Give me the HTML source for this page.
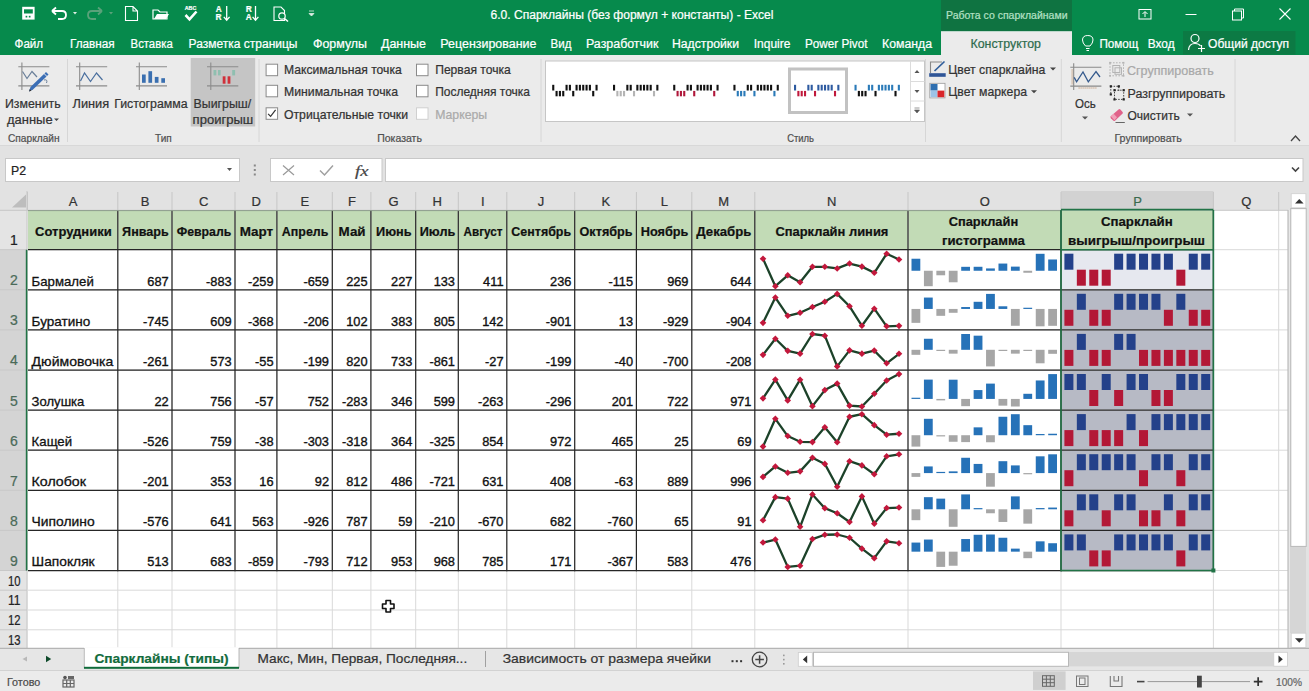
<!DOCTYPE html>
<html><head><meta charset="utf-8"><style>
html,body{margin:0;padding:0;background:#fff;overflow:hidden;}
svg{display:block;font-family:"Liberation Sans",sans-serif;}
</style></head><body>
<svg width="1309" height="691" viewBox="0 0 1309 691">
<rect x="0" y="0" width="1309" height="55" fill="#068a4c" />
<rect x="941" y="0" width="131" height="31" fill="#0f7341" />
<rect x="941" y="31.2" width="131" height="24" fill="#ebebeb" />
<rect x="1183" y="31" width="112.5" height="23.5" fill="#0c7a44" />
<text x="490.5" y="19" font-size="12" fill="#ffffff" text-anchor="start" textLength="283" lengthAdjust="spacingAndGlyphs"  stroke="#ffffff" stroke-width="0.22">6.0. Спарклайны (без формул + константы) - Excel</text>
<text x="946" y="18.5" font-size="10.5" fill="#b3e0c4" text-anchor="start" textLength="121.5" lengthAdjust="spacingAndGlyphs"  stroke="#b3e0c4" stroke-width="0.22">Работа со спарклайнами</text>
<text x="14.6" y="48" font-size="12" fill="#ffffff" text-anchor="start" textLength="28.5" lengthAdjust="spacingAndGlyphs"  stroke="#ffffff" stroke-width="0.22">Файл</text>
<text x="70" y="48" font-size="12" fill="#ffffff" text-anchor="start" textLength="44.7" lengthAdjust="spacingAndGlyphs"  stroke="#ffffff" stroke-width="0.22">Главная</text>
<text x="130.6" y="48" font-size="12" fill="#ffffff" text-anchor="start" textLength="42.1" lengthAdjust="spacingAndGlyphs"  stroke="#ffffff" stroke-width="0.22">Вставка</text>
<text x="188.6" y="48" font-size="12" fill="#ffffff" text-anchor="start" textLength="108.9" lengthAdjust="spacingAndGlyphs"  stroke="#ffffff" stroke-width="0.22">Разметка страницы</text>
<text x="313" y="48" font-size="12" fill="#ffffff" text-anchor="start" textLength="54" lengthAdjust="spacingAndGlyphs"  stroke="#ffffff" stroke-width="0.22">Формулы</text>
<text x="381" y="48" font-size="12" fill="#ffffff" text-anchor="start" textLength="45" lengthAdjust="spacingAndGlyphs"  stroke="#ffffff" stroke-width="0.22">Данные</text>
<text x="440.3" y="48" font-size="12" fill="#ffffff" text-anchor="start" textLength="96.1" lengthAdjust="spacingAndGlyphs"  stroke="#ffffff" stroke-width="0.22">Рецензирование</text>
<text x="550.6" y="48" font-size="12" fill="#ffffff" text-anchor="start" textLength="20.8" lengthAdjust="spacingAndGlyphs"  stroke="#ffffff" stroke-width="0.22">Вид</text>
<text x="586" y="48" font-size="12" fill="#ffffff" text-anchor="start" textLength="72.4" lengthAdjust="spacingAndGlyphs"  stroke="#ffffff" stroke-width="0.22">Разработчик</text>
<text x="672" y="48" font-size="12" fill="#ffffff" text-anchor="start" textLength="67" lengthAdjust="spacingAndGlyphs"  stroke="#ffffff" stroke-width="0.22">Надстройки</text>
<text x="753.8" y="48" font-size="12" fill="#ffffff" text-anchor="start" textLength="36.6" lengthAdjust="spacingAndGlyphs"  stroke="#ffffff" stroke-width="0.22">Inquire</text>
<text x="805" y="48" font-size="12" fill="#ffffff" text-anchor="start" textLength="62.4" lengthAdjust="spacingAndGlyphs"  stroke="#ffffff" stroke-width="0.22">Power Pivot</text>
<text x="882" y="48" font-size="12" fill="#ffffff" text-anchor="start" textLength="50" lengthAdjust="spacingAndGlyphs"  stroke="#ffffff" stroke-width="0.22">Команда</text>
<text x="1099.4" y="48" font-size="12" fill="#ffffff" text-anchor="start" textLength="39.1" lengthAdjust="spacingAndGlyphs"  stroke="#ffffff" stroke-width="0.22">Помощ</text>
<text x="1147.7" y="48" font-size="12" fill="#ffffff" text-anchor="start" textLength="26.9" lengthAdjust="spacingAndGlyphs"  stroke="#ffffff" stroke-width="0.22">Вход</text>
<text x="1208" y="48" font-size="12" fill="#ffffff" text-anchor="start" textLength="81" lengthAdjust="spacingAndGlyphs"  stroke="#ffffff" stroke-width="0.22">Общий доступ</text>
<text x="970.5" y="48" font-size="12.3" fill="#2e6b4e" text-anchor="start" textLength="70.5" lengthAdjust="spacingAndGlyphs"  stroke="#2e6b4e" stroke-width="0.22">Конструктор</text>
<rect x="0" y="55" width="1309" height="91" fill="#ebebeb" />
<rect x="0" y="145" width="1309" height="1" fill="#d8d8d8" />
<line x1="67.5" y1="59" x2="67.5" y2="142" stroke="#d6d6d6" stroke-width="1" />
<line x1="259" y1="59" x2="259" y2="142" stroke="#d6d6d6" stroke-width="1" />
<line x1="541" y1="59" x2="541" y2="142" stroke="#d6d6d6" stroke-width="1" />
<line x1="925.5" y1="59" x2="925.5" y2="142" stroke="#d6d6d6" stroke-width="1" />
<line x1="1061.3" y1="59" x2="1061.3" y2="142" stroke="#d6d6d6" stroke-width="1" />
<line x1="1235" y1="59" x2="1235" y2="142" stroke="#d6d6d6" stroke-width="1" />
<text x="8" y="142" font-size="10.5" fill="#505050" text-anchor="start" textLength="51.6" lengthAdjust="spacingAndGlyphs"  stroke="#505050" stroke-width="0.22">Спарклайн</text>
<text x="155" y="142" font-size="10.5" fill="#505050" text-anchor="start" textLength="16.8" lengthAdjust="spacingAndGlyphs"  stroke="#505050" stroke-width="0.22">Тип</text>
<text x="377.2" y="142" font-size="10.5" fill="#505050" text-anchor="start" textLength="44.7" lengthAdjust="spacingAndGlyphs"  stroke="#505050" stroke-width="0.22">Показать</text>
<text x="787.2" y="142" font-size="10.5" fill="#505050" text-anchor="start" textLength="26.8" lengthAdjust="spacingAndGlyphs"  stroke="#505050" stroke-width="0.22">Стиль</text>
<text x="1114.4" y="142" font-size="10.5" fill="#505050" text-anchor="start" textLength="67.4" lengthAdjust="spacingAndGlyphs"  stroke="#505050" stroke-width="0.22">Группировать</text>
<rect x="190.7" y="58" width="64.5" height="68.5" fill="#c5c5c5" />
<text x="5" y="107.6" font-size="12.3" fill="#333" text-anchor="start" textLength="55.6" lengthAdjust="spacingAndGlyphs"  stroke="#333" stroke-width="0.22">Изменить</text>
<text x="7" y="123.6" font-size="12.3" fill="#333" text-anchor="start" textLength="45.6" lengthAdjust="spacingAndGlyphs"  stroke="#333" stroke-width="0.22">данные</text>
<text x="72.5" y="107.6" font-size="12.3" fill="#333" text-anchor="start" textLength="36.7" lengthAdjust="spacingAndGlyphs"  stroke="#333" stroke-width="0.22">Линия</text>
<text x="114.2" y="107.6" font-size="12.3" fill="#333" text-anchor="start" textLength="73.5" lengthAdjust="spacingAndGlyphs"  stroke="#333" stroke-width="0.22">Гистограмма</text>
<text x="193.6" y="107.6" font-size="12.3" fill="#333" text-anchor="start" textLength="57.6" lengthAdjust="spacingAndGlyphs"  stroke="#333" stroke-width="0.22">Выигрыш/</text>
<text x="192.6" y="123.6" font-size="12.3" fill="#333" text-anchor="start" textLength="60.6" lengthAdjust="spacingAndGlyphs"  stroke="#333" stroke-width="0.22">проигрыш</text>
<rect x="266.1" y="64.2" width="11.5" height="11.5" fill="#ffffff" stroke="#8a8a8a" stroke-width="1"/>
<rect x="266.1" y="85.3" width="11.5" height="11.5" fill="#ffffff" stroke="#8a8a8a" stroke-width="1"/>
<rect x="266.1" y="107.8" width="11.5" height="11.5" fill="#ffffff" stroke="#8a8a8a" stroke-width="1"/>
<path d="M268.1 113.8 L270.6 116.3 L275.6 109.8" stroke="#333" stroke-width="1.2" fill="none"/>
<rect x="416.5" y="64.2" width="11.5" height="11.5" fill="#ffffff" stroke="#8a8a8a" stroke-width="1"/>
<rect x="416.5" y="85.3" width="11.5" height="11.5" fill="#ffffff" stroke="#8a8a8a" stroke-width="1"/>
<rect x="416.5" y="107.8" width="11.5" height="11.5" fill="#ffffff" stroke="#d0d0d0" stroke-width="1"/>
<text x="284" y="74" font-size="12.2" fill="#333" text-anchor="start" textLength="117.7" lengthAdjust="spacingAndGlyphs"  stroke="#333" stroke-width="0.22">Максимальная точка</text>
<text x="284" y="96" font-size="12.2" fill="#333" text-anchor="start" textLength="114" lengthAdjust="spacingAndGlyphs"  stroke="#333" stroke-width="0.22">Минимальная точка</text>
<text x="284" y="118.5" font-size="12.2" fill="#333" text-anchor="start" textLength="124" lengthAdjust="spacingAndGlyphs"  stroke="#333" stroke-width="0.22">Отрицательные точки</text>
<text x="435.2" y="74" font-size="12.2" fill="#333" text-anchor="start" textLength="75.6" lengthAdjust="spacingAndGlyphs"  stroke="#333" stroke-width="0.22">Первая точка</text>
<text x="435.2" y="96" font-size="12.2" fill="#333" text-anchor="start" textLength="94.8" lengthAdjust="spacingAndGlyphs"  stroke="#333" stroke-width="0.22">Последняя точка</text>
<text x="435.2" y="118.5" font-size="12.2" fill="#aaaaaa" text-anchor="start" textLength="52" lengthAdjust="spacingAndGlyphs"  stroke="#aaaaaa" stroke-width="0.22">Маркеры</text>
<rect x="545.5" y="61" width="379" height="60.5" fill="#ffffff" stroke="#c6c6c6" stroke-width="1"/>
<line x1="910.5" y1="61" x2="910.5" y2="121.5" stroke="#dcdcdc" stroke-width="1" />
<line x1="910.5" y1="81.5" x2="924.5" y2="81.5" stroke="#dcdcdc" stroke-width="1" />
<line x1="910.5" y1="101" x2="924.5" y2="101" stroke="#dcdcdc" stroke-width="1" />
<path d="M914.5 73 L917 70 L919.5 73 Z" fill="#555"/>
<path d="M914.5 90 L917 93 L919.5 90 Z" fill="#555"/>
<path d="M914.5 110 L917 113 L919.5 110 Z M914.5 108 h5" fill="#555" stroke="#555" stroke-width="0.6"/>
<rect x="789.5" y="69" width="57" height="43.5" fill="none" stroke="#c2c2c2" stroke-width="3"/>
<rect x="552.2" y="84.8" width="2.1" height="5.7" fill="#111" />
<rect x="555.53" y="90.9" width="2.1" height="5.4" fill="#111" />
<rect x="558.86" y="90.9" width="2.1" height="5.4" fill="#111" />
<rect x="562.19" y="90.9" width="2.1" height="5.4" fill="#111" />
<rect x="565.52" y="84.8" width="2.1" height="5.7" fill="#111" />
<rect x="568.85" y="84.8" width="2.1" height="5.7" fill="#111" />
<rect x="572.18" y="90.9" width="2.1" height="5.4" fill="#111" />
<rect x="575.52" y="84.8" width="2.1" height="5.7" fill="#111" />
<rect x="578.85" y="84.8" width="2.1" height="5.7" fill="#111" />
<rect x="582.18" y="84.8" width="2.1" height="5.7" fill="#111" />
<rect x="585.51" y="84.8" width="2.1" height="5.7" fill="#111" />
<rect x="588.84" y="84.8" width="2.1" height="5.7" fill="#111" />
<rect x="592.17" y="90.9" width="2.1" height="5.4" fill="#111" />
<rect x="595.5" y="84.8" width="2.1" height="5.7" fill="#111" />
<rect x="613.0" y="84.8" width="2.1" height="5.7" fill="#111" />
<rect x="616.33" y="90.9" width="2.1" height="5.4" fill="#b4b4b4" />
<rect x="619.66" y="90.9" width="2.1" height="5.4" fill="#b4b4b4" />
<rect x="622.99" y="90.9" width="2.1" height="5.4" fill="#b4b4b4" />
<rect x="626.32" y="84.8" width="2.1" height="5.7" fill="#111" />
<rect x="629.65" y="84.8" width="2.1" height="5.7" fill="#111" />
<rect x="632.98" y="90.9" width="2.1" height="5.4" fill="#b4b4b4" />
<rect x="636.32" y="84.8" width="2.1" height="5.7" fill="#111" />
<rect x="639.65" y="84.8" width="2.1" height="5.7" fill="#111" />
<rect x="642.98" y="84.8" width="2.1" height="5.7" fill="#111" />
<rect x="646.31" y="84.8" width="2.1" height="5.7" fill="#111" />
<rect x="649.64" y="84.8" width="2.1" height="5.7" fill="#111" />
<rect x="652.97" y="90.9" width="2.1" height="5.4" fill="#b4b4b4" />
<rect x="656.3" y="84.8" width="2.1" height="5.7" fill="#111" />
<rect x="673.2" y="84.8" width="2.1" height="5.7" fill="#111" />
<rect x="676.53" y="90.9" width="2.1" height="5.4" fill="#b0173a" />
<rect x="679.86" y="90.9" width="2.1" height="5.4" fill="#b0173a" />
<rect x="683.19" y="90.9" width="2.1" height="5.4" fill="#b0173a" />
<rect x="686.52" y="84.8" width="2.1" height="5.7" fill="#111" />
<rect x="689.85" y="84.8" width="2.1" height="5.7" fill="#111" />
<rect x="693.18" y="90.9" width="2.1" height="5.4" fill="#b0173a" />
<rect x="696.52" y="84.8" width="2.1" height="5.7" fill="#111" />
<rect x="699.85" y="84.8" width="2.1" height="5.7" fill="#111" />
<rect x="703.18" y="84.8" width="2.1" height="5.7" fill="#111" />
<rect x="706.51" y="84.8" width="2.1" height="5.7" fill="#111" />
<rect x="709.84" y="84.8" width="2.1" height="5.7" fill="#111" />
<rect x="713.17" y="90.9" width="2.1" height="5.4" fill="#b0173a" />
<rect x="716.5" y="84.8" width="2.1" height="5.7" fill="#111" />
<rect x="733.4" y="84.8" width="2.1" height="5.7" fill="#111" />
<rect x="736.73" y="90.9" width="2.1" height="5.4" fill="#2a7ab8" />
<rect x="740.06" y="90.9" width="2.1" height="5.4" fill="#2a7ab8" />
<rect x="743.39" y="90.9" width="2.1" height="5.4" fill="#2a7ab8" />
<rect x="746.72" y="84.8" width="2.1" height="5.7" fill="#111" />
<rect x="750.05" y="84.8" width="2.1" height="5.7" fill="#111" />
<rect x="753.38" y="90.9" width="2.1" height="5.4" fill="#2a7ab8" />
<rect x="756.72" y="84.8" width="2.1" height="5.7" fill="#111" />
<rect x="760.05" y="84.8" width="2.1" height="5.7" fill="#111" />
<rect x="763.38" y="84.8" width="2.1" height="5.7" fill="#111" />
<rect x="766.71" y="84.8" width="2.1" height="5.7" fill="#111" />
<rect x="770.04" y="84.8" width="2.1" height="5.7" fill="#111" />
<rect x="773.37" y="90.9" width="2.1" height="5.4" fill="#2a7ab8" />
<rect x="776.7" y="84.8" width="2.1" height="5.7" fill="#111" />
<rect x="794.0" y="84.8" width="2.1" height="5.7" fill="#2d5aa0" />
<rect x="797.33" y="90.9" width="2.1" height="5.4" fill="#c0193c" />
<rect x="800.66" y="90.9" width="2.1" height="5.4" fill="#c0193c" />
<rect x="803.99" y="90.9" width="2.1" height="5.4" fill="#c0193c" />
<rect x="807.32" y="84.8" width="2.1" height="5.7" fill="#2d5aa0" />
<rect x="810.65" y="84.8" width="2.1" height="5.7" fill="#2d5aa0" />
<rect x="813.98" y="90.9" width="2.1" height="5.4" fill="#c0193c" />
<rect x="817.32" y="84.8" width="2.1" height="5.7" fill="#2d5aa0" />
<rect x="820.65" y="84.8" width="2.1" height="5.7" fill="#2d5aa0" />
<rect x="823.98" y="84.8" width="2.1" height="5.7" fill="#2d5aa0" />
<rect x="827.31" y="84.8" width="2.1" height="5.7" fill="#2d5aa0" />
<rect x="830.64" y="84.8" width="2.1" height="5.7" fill="#2d5aa0" />
<rect x="833.97" y="90.9" width="2.1" height="5.4" fill="#c0193c" />
<rect x="837.3" y="84.8" width="2.1" height="5.7" fill="#2d5aa0" />
<rect x="854.5" y="84.8" width="2.1" height="5.7" fill="#2a7ab8" />
<rect x="857.83" y="90.9" width="2.1" height="5.4" fill="#111" />
<rect x="861.16" y="90.9" width="2.1" height="5.4" fill="#111" />
<rect x="864.49" y="90.9" width="2.1" height="5.4" fill="#111" />
<rect x="867.82" y="84.8" width="2.1" height="5.7" fill="#2a7ab8" />
<rect x="871.15" y="84.8" width="2.1" height="5.7" fill="#2a7ab8" />
<rect x="874.48" y="90.9" width="2.1" height="5.4" fill="#111" />
<rect x="877.82" y="84.8" width="2.1" height="5.7" fill="#2a7ab8" />
<rect x="881.15" y="84.8" width="2.1" height="5.7" fill="#2a7ab8" />
<rect x="884.48" y="84.8" width="2.1" height="5.7" fill="#2a7ab8" />
<rect x="887.81" y="84.8" width="2.1" height="5.7" fill="#2a7ab8" />
<rect x="891.14" y="84.8" width="2.1" height="5.7" fill="#2a7ab8" />
<rect x="894.47" y="90.9" width="2.1" height="5.4" fill="#111" />
<rect x="897.8" y="84.8" width="2.1" height="5.7" fill="#2a7ab8" />
<text x="948.3" y="74" font-size="12.2" fill="#333" text-anchor="start" textLength="97" lengthAdjust="spacingAndGlyphs"  stroke="#333" stroke-width="0.22">Цвет спарклайна</text>
<text x="948.3" y="96" font-size="12.2" fill="#333" text-anchor="start" textLength="78.7" lengthAdjust="spacingAndGlyphs"  stroke="#333" stroke-width="0.22">Цвет маркера</text>
<path d="M1050 67.6 L1056 67.6 L1053 70.6 Z" fill="#444"/>
<path d="M1031 90.2 L1037 90.2 L1034 93.2 Z" fill="#444"/>
<path d="M930.5 73 V62 H942" stroke="#8a8a8a" stroke-width="1.1" fill="none"/>
<path d="M934.5 71 L944.5 61.5" stroke="#2f5d9a" stroke-width="1.7"/>
<rect x="929.2" y="73.2" width="16.5" height="3.6" fill="#2f5597" />
<rect x="929.8" y="83.3" width="15.2" height="14.6" fill="#ffffff" stroke="#999" stroke-width="0.8"/>
<rect x="930.5" y="84" width="7" height="6.6" fill="#2f6fb0" />
<rect x="930.5" y="90.6" width="7" height="6.6" fill="#9dc3e6" />
<rect x="937.5" y="90.6" width="6.8" height="6.6" fill="#d9262a" />
<text x="1075" y="107.5" font-size="12.3" fill="#333" text-anchor="start" textLength="20.7" lengthAdjust="spacingAndGlyphs"  stroke="#333" stroke-width="0.22">Ось</text>
<path d="M1082 116.5 L1088 116.5 L1085 119.5 Z" fill="#555"/>
<path d="M1072.3 69.6 V84.2" stroke="#c9a98e" stroke-width="2" stroke-dasharray="1 1"/><path d="M1078.6 88 H1097" stroke="#c9a98e" stroke-width="1.3" stroke-dasharray="1 1"/>
<g stroke="#8a8a8a" stroke-width="1.1" fill="none"><path d="M1073.7 63.3 V90 M1070.3 67.2 H1101.4 M1070.3 86.1 H1101.4"/></g>
<path d="M1074.2 77.4 L1076.6 81.8 L1083 72 L1088.3 81.8 L1096 71.6 L1100 77" stroke="#34598c" stroke-width="1.3" fill="none"/>
<text x="1127" y="74.5" font-size="12.3" fill="#a8a8a8" text-anchor="start" textLength="86.7" lengthAdjust="spacingAndGlyphs"  stroke="#a8a8a8" stroke-width="0.22">Сгруппировать</text>
<text x="1127.5" y="97.5" font-size="12.3" fill="#333" text-anchor="start" textLength="97.8" lengthAdjust="spacingAndGlyphs"  stroke="#333" stroke-width="0.22">Разгруппировать</text>
<text x="1127.5" y="120" font-size="12.3" fill="#333" text-anchor="start" textLength="52.3" lengthAdjust="spacingAndGlyphs"  stroke="#333" stroke-width="0.22">Очистить</text>
<path d="M1187 113.5 L1193 113.5 L1190 116.5 Z" fill="#555"/>
<g fill="none" stroke="#b4b4b4" stroke-width="1"><rect x="1110" y="62.8" width="13.5" height="13" stroke-dasharray="1.6 1.4"/><rect x="1112.8" y="65.5" width="7" height="7"/><rect x="1115" y="67.8" width="6.5" height="6.5"/></g>
<rect x="1109.1" y="61.9" width="1.8" height="1.8" fill="#b4b4b4" />
<rect x="1122.6" y="61.9" width="1.8" height="1.8" fill="#b4b4b4" />
<rect x="1109.1" y="74.89999999999999" width="1.8" height="1.8" fill="#b4b4b4" />
<rect x="1122.6" y="74.89999999999999" width="1.8" height="1.8" fill="#b4b4b4" />
<g fill="none" stroke="#333" stroke-width="0.9"><path d="M1110.8 86.3 H1118.8 V92.2 M1110.8 86.3 V95" stroke-dasharray="1.5 1.3"/><rect x="1114.5" y="90.2" width="9.2" height="9.2" stroke-dasharray="1.5 1.3"/></g>
<rect x="1109.7" y="85.2" width="2.2" height="2.2" fill="#222" />
<rect x="1117.7" y="85.2" width="2.2" height="2.2" fill="#222" />
<rect x="1122.6000000000001" y="89.10000000000001" width="2.2" height="2.2" fill="#222" />
<rect x="1122.6000000000001" y="98.30000000000001" width="2.2" height="2.2" fill="#222" />
<rect x="1113.4" y="98.30000000000001" width="2.2" height="2.2" fill="#222" />
<rect x="1109.7" y="93.30000000000001" width="2.2" height="2.2" fill="#222" />
<rect x="1113.4" y="89.10000000000001" width="2.2" height="2.2" fill="#222" />
<path d="M1110.8 116.3 L1118.5 109.5 Q1119.5 108.7 1120.4 109.6 L1122.6 112 Q1123.3 112.9 1122.4 113.8 L1115 120.7 Q1114 121.5 1113.1 120.6 L1110.9 118.3 Q1110 117.3 1110.8 116.3 Z" fill="#e0628a"/><path d="M1110.8 116.3 L1113.6 113.8 L1117 117.3 L1114.5 120.2 Z" fill="#f0a0b8"/><path d="M1115.5 122.5 H1124.8" stroke="#666" stroke-width="1"/>
<path d="M1291 141 L1295.5 136 L1300 141" stroke="#444" stroke-width="1.3" fill="none"/>
<g stroke="#8c8c8c" stroke-width="1.1" fill="none"><path d="M21.9 62.5 V90 M18.3 66.8 H49.4 M18.3 85.9 H49.4"/></g>
<path d="M22.5 71.5 L27 78.5 L32 71.5 L37 77" stroke="#6a7f99" stroke-width="1.2" fill="none"/>
<path d="M29 91.5 L30.5 87 L44 74 L46.5 76.5 L33 89.5 Z" fill="#3b6eb5"/><path d="M44.5 73.5 L46 72 L48.5 74.5 L47 76 Z" fill="#3b6eb5"/><path d="M29 91.5 L29.8 89 L31.5 90.7 Z" fill="#333"/><path d="M44 80 Q48 79 46.5 83" stroke="#6a7f99" stroke-width="1" fill="none"/>
<g stroke="#8c8c8c" stroke-width="1.1" fill="none"><path d="M79.7 62.5 V90 M76 66.8 H107.2 M76 85.9 H107.2"/></g>
<path d="M80.5 81 L84.5 73 L90.5 81.5 L96.5 73 L102.5 80" stroke="#4a6f9e" stroke-width="1.2" fill="none"/>
<g stroke="#8c8c8c" stroke-width="1.1" fill="none"><path d="M139.3 62.5 V90 M136 66.8 H167 M136 85.9 H167"/></g>
<rect x="142" y="74.5" width="3.7" height="8.3" fill="#3a6fb0" />
<rect x="148.4" y="71.2" width="3.7" height="11.6" fill="#3a6fb0" />
<rect x="154.8" y="76.9" width="3.7" height="5.9" fill="#3a6fb0" />
<rect x="161.3" y="78.2" width="3.7" height="4.6" fill="#3a6fb0" />
<g stroke="#8c8c8c" stroke-width="1.1" fill="none"><path d="M210.8 62.5 V90 M207 66.8 H238.3 M207 85.9 H238.3"/></g>
<rect x="213.5" y="70" width="2.8" height="5.4" fill="#8fbfb0" />
<rect x="218" y="70" width="2.6" height="5.4" fill="#8fbfb0" />
<rect x="232.2" y="70" width="2.9" height="5.4" fill="#8fbfb0" />
<rect x="222.7" y="76.3" width="2.8" height="7.4" fill="#d0303a" />
<rect x="227.6" y="76.3" width="2.8" height="7.4" fill="#d0303a" />
<path d="M54 118.5 L59 118.5 L56.5 121 Z" fill="#444"/>
<rect x="22.2" y="6.8" width="12.4" height="12.8" fill="#ffffff" />
<rect x="24" y="9.3" width="8.8" height="4.2" fill="#068a4c" />
<rect x="25.6" y="15.8" width="1.7" height="1.7" fill="#068a4c" />
<rect x="28.8" y="15.8" width="1.7" height="1.7" fill="#068a4c" />
<path d="M53 11 H62 Q66 11 66 15 Q66 19 62 19 H58" stroke="#fff" stroke-width="1.8" fill="none"/><path d="M52 11 L56 7.5 M52 11 L56 14.5" stroke="#fff" stroke-width="1.8"/>
<path d="M73 12 L77 12 L75 14.5 Z" fill="#dfeee5"/>
<path d="M101 11 H92 Q88 11 88 15 Q88 19 92 19 H96" stroke="#5aa27a" stroke-width="1.8" fill="none"/><path d="M102 11 L98 7.5 M102 11 L98 14.5" stroke="#5aa27a" stroke-width="1.8"/>
<path d="M109 12 L113 12 L111 14.5 Z" fill="#5aa27a"/>
<path d="M125.5 6.5 H133 L137.5 11 V20.5 H125.5 Z M133 6.5 V11 H137.5" stroke="#fff" stroke-width="1.1" fill="none"/>
<path d="M153 10 H158 L160 12 H167 V19 H153 Z" stroke="#fff" stroke-width="1.2" fill="none"/><path d="M154 19 L157 14 H169 L166 19 Z" fill="#fff"/>
<text x="190.5" y="9.8" font-size="6.2" font-weight="700" fill="#fff" text-anchor="middle" textLength="11.5" lengthAdjust="spacingAndGlyphs"  stroke="#fff" stroke-width="0.22">ABC</text>
<path d="M185.5 15 L189.5 19.3 L196.5 11.5" stroke="#fff" stroke-width="2.6" fill="none"/>
<text x="218.6" y="12.4" font-size="8.2" font-weight="700" fill="#fff" text-anchor="middle"  stroke="#fff" stroke-width="0.22">A</text>
<text x="218.6" y="20" font-size="8.2" font-weight="700" fill="#fff" text-anchor="middle" transform="translate(437.2 0) scale(-1 1)" stroke="#fff" stroke-width="0.22">Я</text>
<path d="M226.7 6 V19.5 M223.8 16.8 L226.7 20.2 L229.6 16.8" stroke="#fff" stroke-width="1.3" fill="none"/>
<text x="248.7" y="12.4" font-size="8.2" font-weight="700" fill="#fff" text-anchor="middle" transform="translate(497.4 0) scale(-1 1)" stroke="#fff" stroke-width="0.22">Я</text>
<text x="248.7" y="20" font-size="8.2" font-weight="700" fill="#fff" text-anchor="middle"  stroke="#fff" stroke-width="0.22">A</text>
<path d="M255.5 6 V19.5 M252.6 16.8 L255.5 20.2 L258.4 16.8" stroke="#fff" stroke-width="1.3" fill="none"/>
<path d="M274 7 H281 L284.5 10.5 V20.5 H274 Z" stroke="#fff" stroke-width="1.1" fill="none"/><circle cx="282" cy="16" r="3.2" stroke="#fff" stroke-width="1.2" fill="#068a4c"/><path d="M284.5 18.5 L288 21.5" stroke="#fff" stroke-width="1.6"/>
<path d="M309 11 H314 M309 13.5 L314 13.5 L311.5 16 Z" stroke="#dfeee5" stroke-width="0.8" fill="#dfeee5"/>
<g stroke="#fff" stroke-width="1" fill="none"><rect x="1139" y="9.5" width="12" height="9.5"/><path d="M1145 17 V12 M1142.5 14 L1145 11.5 L1147.5 14"/></g>
<path d="M1185.5 14.5 H1196.5" stroke="#fff" stroke-width="1"/>
<g stroke="#fff" stroke-width="1" fill="none"><rect x="1232.5" y="11" width="9" height="9"/><path d="M1234.5 11 V9 H1243.5 V18 H1241.5"/></g>
<path d="M1279.5 8.5 L1290.5 19.5 M1290.5 8.5 L1279.5 19.5" stroke="#fff" stroke-width="1.1"/>
<path d="M1085.5 46 Q1082.5 43 1082.5 40 Q1082.5 35.5 1087.8 35.5 Q1093 35.5 1093 40 Q1093 43 1090 46 Z M1086 48.5 H1089.5 M1086.5 50.5 H1089" stroke="#fff" stroke-width="1" fill="none"/>
<circle cx="1195" cy="38.5" r="4" stroke="#fff" stroke-width="1.2" fill="none"/><path d="M1188.5 50 Q1189 43.5 1195 43.5 Q1199 43.5 1200.5 46" stroke="#fff" stroke-width="1.2" fill="none"/><path d="M1201.5 45 V52 M1198 48.5 H1205" stroke="#fff" stroke-width="1.2"/>
<rect x="0" y="146" width="1309" height="45" fill="#e2e2e2" />
<rect x="5.5" y="158.5" width="234" height="23" fill="#ffffff" stroke="#c8c8c8" stroke-width="1"/>
<text x="11" y="175" font-size="12.3" fill="#222" text-anchor="start"  stroke="#222" stroke-width="0.22">P2</text>
<path d="M227 168 L232 168 L229.5 171 Z" fill="#555"/>
<rect x="253.8" y="164.5" width="2" height="2" fill="#888" />
<rect x="253.8" y="169" width="2" height="2" fill="#888" />
<rect x="253.8" y="173.5" width="2" height="2" fill="#888" />
<rect x="270.5" y="158.5" width="111.5" height="23" fill="#ffffff" stroke="#c8c8c8" stroke-width="1"/>
<path d="M283 165.5 L294 175 M294 165.5 L283 175" stroke="#9a9a9a" stroke-width="1.2"/>
<path d="M320 170.5 L324.5 175 L333 165.5" stroke="#a0a0a0" stroke-width="1.5" fill="none"/>
<text x="355" y="175.5" font-size="15.5" fill="#444" text-anchor="start" textLength="13.5" lengthAdjust="spacingAndGlyphs" font-family="Liberation Serif" font-style="italic" stroke="#444" stroke-width="0.22">fx</text>
<rect x="385.5" y="158.5" width="917.5" height="23" fill="#ffffff" stroke="#c8c8c8" stroke-width="1"/>
<path d="M1292 167.5 L1295.5 171 L1299 167.5" stroke="#444" stroke-width="1.6" fill="none"/>
<rect x="0" y="191" width="1288" height="19.5" fill="#e2e2e2" />
<rect x="0" y="210" width="27.5" height="438" fill="#e4e4e4" />
<rect x="1061" y="191" width="152.4" height="19.5" fill="#d2d2d2" />
<rect x="0" y="249.7" width="27" height="320.8" fill="#d4d4d4" />
<rect x="28" y="210" width="1260" height="438" fill="#ffffff" />
<rect x="28" y="210" width="1185.4" height="40" fill="#c2dbb6" />
<rect x="1061" y="289.8" width="152.4" height="280.7" fill="#b7bac5" />
<rect x="1061" y="249.7" width="152.4" height="40.1" fill="#e6e8ef" />
<line x1="117.8" y1="210" x2="117.8" y2="648" stroke="#d9d9d9" stroke-width="1" />
<line x1="172.0" y1="210" x2="172.0" y2="648" stroke="#d9d9d9" stroke-width="1" />
<line x1="235.0" y1="210" x2="235.0" y2="648" stroke="#d9d9d9" stroke-width="1" />
<line x1="276.9" y1="210" x2="276.9" y2="648" stroke="#d9d9d9" stroke-width="1" />
<line x1="332.3" y1="210" x2="332.3" y2="648" stroke="#d9d9d9" stroke-width="1" />
<line x1="370.9" y1="210" x2="370.9" y2="648" stroke="#d9d9d9" stroke-width="1" />
<line x1="415.7" y1="210" x2="415.7" y2="648" stroke="#d9d9d9" stroke-width="1" />
<line x1="458.3" y1="210" x2="458.3" y2="648" stroke="#d9d9d9" stroke-width="1" />
<line x1="506.8" y1="210" x2="506.8" y2="648" stroke="#d9d9d9" stroke-width="1" />
<line x1="574.7" y1="210" x2="574.7" y2="648" stroke="#d9d9d9" stroke-width="1" />
<line x1="636.4" y1="210" x2="636.4" y2="648" stroke="#d9d9d9" stroke-width="1" />
<line x1="691.8" y1="210" x2="691.8" y2="648" stroke="#d9d9d9" stroke-width="1" />
<line x1="754.8" y1="210" x2="754.8" y2="648" stroke="#d9d9d9" stroke-width="1" />
<line x1="908" y1="210" x2="908" y2="648" stroke="#d9d9d9" stroke-width="1" />
<line x1="1061" y1="210" x2="1061" y2="648" stroke="#d9d9d9" stroke-width="1" />
<line x1="1213.4" y1="210" x2="1213.4" y2="648" stroke="#d9d9d9" stroke-width="1" />
<line x1="1278.7" y1="210" x2="1278.7" y2="648" stroke="#d9d9d9" stroke-width="1" />
<line x1="28" y1="249.7" x2="1288" y2="249.7" stroke="#d9d9d9" stroke-width="1" />
<line x1="28" y1="289.8" x2="1288" y2="289.8" stroke="#d9d9d9" stroke-width="1" />
<line x1="28" y1="329.9" x2="1288" y2="329.9" stroke="#d9d9d9" stroke-width="1" />
<line x1="28" y1="370.0" x2="1288" y2="370.0" stroke="#d9d9d9" stroke-width="1" />
<line x1="28" y1="410.1" x2="1288" y2="410.1" stroke="#d9d9d9" stroke-width="1" />
<line x1="28" y1="450.2" x2="1288" y2="450.2" stroke="#d9d9d9" stroke-width="1" />
<line x1="28" y1="490.3" x2="1288" y2="490.3" stroke="#d9d9d9" stroke-width="1" />
<line x1="28" y1="530.4" x2="1288" y2="530.4" stroke="#d9d9d9" stroke-width="1" />
<line x1="28" y1="570.5" x2="1288" y2="570.5" stroke="#d9d9d9" stroke-width="1" />
<line x1="28" y1="590.2" x2="1288" y2="590.2" stroke="#d9d9d9" stroke-width="1" />
<line x1="28" y1="610.0" x2="1288" y2="610.0" stroke="#d9d9d9" stroke-width="1" />
<line x1="28" y1="629.8" x2="1288" y2="629.8" stroke="#d9d9d9" stroke-width="1" />
<line x1="27.5" y1="192" x2="27.5" y2="210" stroke="#c6c6c6" stroke-width="1" />
<line x1="117.8" y1="192" x2="117.8" y2="210" stroke="#c6c6c6" stroke-width="1" />
<line x1="172.0" y1="192" x2="172.0" y2="210" stroke="#c6c6c6" stroke-width="1" />
<line x1="235.0" y1="192" x2="235.0" y2="210" stroke="#c6c6c6" stroke-width="1" />
<line x1="276.9" y1="192" x2="276.9" y2="210" stroke="#c6c6c6" stroke-width="1" />
<line x1="332.3" y1="192" x2="332.3" y2="210" stroke="#c6c6c6" stroke-width="1" />
<line x1="370.9" y1="192" x2="370.9" y2="210" stroke="#c6c6c6" stroke-width="1" />
<line x1="415.7" y1="192" x2="415.7" y2="210" stroke="#c6c6c6" stroke-width="1" />
<line x1="458.3" y1="192" x2="458.3" y2="210" stroke="#c6c6c6" stroke-width="1" />
<line x1="506.8" y1="192" x2="506.8" y2="210" stroke="#c6c6c6" stroke-width="1" />
<line x1="574.7" y1="192" x2="574.7" y2="210" stroke="#c6c6c6" stroke-width="1" />
<line x1="636.4" y1="192" x2="636.4" y2="210" stroke="#c6c6c6" stroke-width="1" />
<line x1="691.8" y1="192" x2="691.8" y2="210" stroke="#c6c6c6" stroke-width="1" />
<line x1="754.8" y1="192" x2="754.8" y2="210" stroke="#c6c6c6" stroke-width="1" />
<line x1="908" y1="192" x2="908" y2="210" stroke="#c6c6c6" stroke-width="1" />
<line x1="1061" y1="192" x2="1061" y2="210" stroke="#c6c6c6" stroke-width="1" />
<line x1="1213.4" y1="192" x2="1213.4" y2="210" stroke="#c6c6c6" stroke-width="1" />
<line x1="1278.7" y1="192" x2="1278.7" y2="210" stroke="#c6c6c6" stroke-width="1" />
<line x1="0" y1="210.3" x2="1288" y2="210.3" stroke="#c6c6c6" stroke-width="1" />
<line x1="0" y1="249.7" x2="27" y2="249.7" stroke="#c8c8c8" stroke-width="1" />
<line x1="0" y1="289.8" x2="27" y2="289.8" stroke="#c8c8c8" stroke-width="1" />
<line x1="0" y1="329.9" x2="27" y2="329.9" stroke="#c8c8c8" stroke-width="1" />
<line x1="0" y1="370.0" x2="27" y2="370.0" stroke="#c8c8c8" stroke-width="1" />
<line x1="0" y1="410.1" x2="27" y2="410.1" stroke="#c8c8c8" stroke-width="1" />
<line x1="0" y1="450.2" x2="27" y2="450.2" stroke="#c8c8c8" stroke-width="1" />
<line x1="0" y1="490.3" x2="27" y2="490.3" stroke="#c8c8c8" stroke-width="1" />
<line x1="0" y1="530.4" x2="27" y2="530.4" stroke="#c8c8c8" stroke-width="1" />
<line x1="0" y1="570.5" x2="27" y2="570.5" stroke="#c8c8c8" stroke-width="1" />
<line x1="0" y1="590.2" x2="27" y2="590.2" stroke="#c8c8c8" stroke-width="1" />
<line x1="0" y1="610.0" x2="27" y2="610.0" stroke="#c8c8c8" stroke-width="1" />
<line x1="0" y1="629.8" x2="27" y2="629.8" stroke="#c8c8c8" stroke-width="1" />
<line x1="27" y1="191" x2="27" y2="648" stroke="#c6c6c6" stroke-width="1" />
<line x1="26.6" y1="249.7" x2="26.6" y2="570.5" stroke="#217346" stroke-width="1.6" />
<line x1="1061" y1="209.6" x2="1213.4" y2="209.6" stroke="#217346" stroke-width="1.6" />
<path d="M12 207.5 L26 207.5 L26 194.5 Z" fill="#bdbdbd"/>
<text x="73.2" y="205.5" font-size="13" fill="#333" text-anchor="middle"  stroke="#333" stroke-width="0.22">A</text>
<text x="145.20000000000002" y="205.5" font-size="13" fill="#333" text-anchor="middle"  stroke="#333" stroke-width="0.22">B</text>
<text x="203.8" y="205.5" font-size="13" fill="#333" text-anchor="middle"  stroke="#333" stroke-width="0.22">C</text>
<text x="256.25" y="205.5" font-size="13" fill="#333" text-anchor="middle"  stroke="#333" stroke-width="0.22">D</text>
<text x="304.90000000000003" y="205.5" font-size="13" fill="#333" text-anchor="middle"  stroke="#333" stroke-width="0.22">E</text>
<text x="351.90000000000003" y="205.5" font-size="13" fill="#333" text-anchor="middle"  stroke="#333" stroke-width="0.22">F</text>
<text x="393.59999999999997" y="205.5" font-size="13" fill="#333" text-anchor="middle"  stroke="#333" stroke-width="0.22">G</text>
<text x="437.3" y="205.5" font-size="13" fill="#333" text-anchor="middle"  stroke="#333" stroke-width="0.22">H</text>
<text x="482.85" y="205.5" font-size="13" fill="#333" text-anchor="middle"  stroke="#333" stroke-width="0.22">I</text>
<text x="541.05" y="205.5" font-size="13" fill="#333" text-anchor="middle"  stroke="#333" stroke-width="0.22">J</text>
<text x="605.8499999999999" y="205.5" font-size="13" fill="#333" text-anchor="middle"  stroke="#333" stroke-width="0.22">K</text>
<text x="664.3999999999999" y="205.5" font-size="13" fill="#333" text-anchor="middle"  stroke="#333" stroke-width="0.22">L</text>
<text x="723.5999999999999" y="205.5" font-size="13" fill="#333" text-anchor="middle"  stroke="#333" stroke-width="0.22">M</text>
<text x="831.6999999999999" y="205.5" font-size="13" fill="#333" text-anchor="middle"  stroke="#333" stroke-width="0.22">N</text>
<text x="984.8" y="205.5" font-size="13" fill="#333" text-anchor="middle"  stroke="#333" stroke-width="0.22">O</text>
<text x="1137.5" y="205.5" font-size="13" fill="#3a6a4e" text-anchor="middle"  stroke="#3a6a4e" stroke-width="0.22">P</text>
<text x="1246.3500000000001" y="205.5" font-size="13" fill="#333" text-anchor="middle"  stroke="#333" stroke-width="0.22">Q</text>
<text x="14" y="245.1" font-size="14" fill="#222" text-anchor="middle" textLength="7.8" lengthAdjust="spacingAndGlyphs"  stroke="#222" stroke-width="0.22">1</text>
<text x="14" y="285.2" font-size="14" fill="#4a6a58" text-anchor="middle" textLength="7.8" lengthAdjust="spacingAndGlyphs"  stroke="#4a6a58" stroke-width="0.22">2</text>
<text x="14" y="325.29999999999995" font-size="14" fill="#4a6a58" text-anchor="middle" textLength="7.8" lengthAdjust="spacingAndGlyphs"  stroke="#4a6a58" stroke-width="0.22">3</text>
<text x="14" y="365.4" font-size="14" fill="#4a6a58" text-anchor="middle" textLength="7.8" lengthAdjust="spacingAndGlyphs"  stroke="#4a6a58" stroke-width="0.22">4</text>
<text x="14" y="405.5" font-size="14" fill="#4a6a58" text-anchor="middle" textLength="7.8" lengthAdjust="spacingAndGlyphs"  stroke="#4a6a58" stroke-width="0.22">5</text>
<text x="14" y="445.59999999999997" font-size="14" fill="#4a6a58" text-anchor="middle" textLength="7.8" lengthAdjust="spacingAndGlyphs"  stroke="#4a6a58" stroke-width="0.22">6</text>
<text x="14" y="485.7" font-size="14" fill="#4a6a58" text-anchor="middle" textLength="7.8" lengthAdjust="spacingAndGlyphs"  stroke="#4a6a58" stroke-width="0.22">7</text>
<text x="14" y="525.8" font-size="14" fill="#4a6a58" text-anchor="middle" textLength="7.8" lengthAdjust="spacingAndGlyphs"  stroke="#4a6a58" stroke-width="0.22">8</text>
<text x="14" y="565.9" font-size="14" fill="#4a6a58" text-anchor="middle" textLength="7.8" lengthAdjust="spacingAndGlyphs"  stroke="#4a6a58" stroke-width="0.22">9</text>
<text x="14.2" y="585.6" font-size="14" fill="#222" text-anchor="middle" textLength="12.5" lengthAdjust="spacingAndGlyphs"  stroke="#222" stroke-width="0.22">10</text>
<text x="14.2" y="605.4" font-size="14" fill="#222" text-anchor="middle" textLength="12.5" lengthAdjust="spacingAndGlyphs"  stroke="#222" stroke-width="0.22">11</text>
<text x="14.2" y="625.1999999999999" font-size="14" fill="#222" text-anchor="middle" textLength="12.5" lengthAdjust="spacingAndGlyphs"  stroke="#222" stroke-width="0.22">12</text>
<text x="14.2" y="645.0" font-size="14" fill="#222" text-anchor="middle" textLength="12.5" lengthAdjust="spacingAndGlyphs"  stroke="#222" stroke-width="0.22">13</text>
<line x1="117.8" y1="210.3" x2="117.8" y2="571.2" stroke="#262626" stroke-width="1.2" />
<line x1="172.0" y1="210.3" x2="172.0" y2="571.2" stroke="#262626" stroke-width="1.2" />
<line x1="235.0" y1="210.3" x2="235.0" y2="571.2" stroke="#262626" stroke-width="1.2" />
<line x1="276.9" y1="210.3" x2="276.9" y2="571.2" stroke="#262626" stroke-width="1.2" />
<line x1="332.3" y1="210.3" x2="332.3" y2="571.2" stroke="#262626" stroke-width="1.2" />
<line x1="370.9" y1="210.3" x2="370.9" y2="571.2" stroke="#262626" stroke-width="1.2" />
<line x1="415.7" y1="210.3" x2="415.7" y2="571.2" stroke="#262626" stroke-width="1.2" />
<line x1="458.3" y1="210.3" x2="458.3" y2="571.2" stroke="#262626" stroke-width="1.2" />
<line x1="506.8" y1="210.3" x2="506.8" y2="571.2" stroke="#262626" stroke-width="1.2" />
<line x1="574.7" y1="210.3" x2="574.7" y2="571.2" stroke="#262626" stroke-width="1.2" />
<line x1="636.4" y1="210.3" x2="636.4" y2="571.2" stroke="#262626" stroke-width="1.2" />
<line x1="691.8" y1="210.3" x2="691.8" y2="571.2" stroke="#262626" stroke-width="1.2" />
<line x1="754.8" y1="210.3" x2="754.8" y2="571.2" stroke="#262626" stroke-width="1.2" />
<line x1="908" y1="210.3" x2="908" y2="571.2" stroke="#262626" stroke-width="1.2" />
<line x1="1061" y1="210.3" x2="1061" y2="571.2" stroke="#262626" stroke-width="1.2" />
<line x1="1213.4" y1="210.3" x2="1213.4" y2="571.2" stroke="#262626" stroke-width="1.2" />
<line x1="28" y1="249.7" x2="1213.4" y2="249.7" stroke="#262626" stroke-width="1.25" />
<line x1="28" y1="289.8" x2="1213.4" y2="289.8" stroke="#262626" stroke-width="1.25" />
<line x1="28" y1="329.9" x2="1213.4" y2="329.9" stroke="#262626" stroke-width="1.25" />
<line x1="28" y1="370.0" x2="1213.4" y2="370.0" stroke="#262626" stroke-width="1.25" />
<line x1="28" y1="410.1" x2="1213.4" y2="410.1" stroke="#262626" stroke-width="1.25" />
<line x1="28" y1="450.2" x2="1213.4" y2="450.2" stroke="#262626" stroke-width="1.25" />
<line x1="28" y1="490.3" x2="1213.4" y2="490.3" stroke="#262626" stroke-width="1.25" />
<line x1="28" y1="530.4" x2="1213.4" y2="530.4" stroke="#262626" stroke-width="1.25" />
<line x1="28" y1="570.5" x2="1213.4" y2="570.5" stroke="#262626" stroke-width="1.25" />
<line x1="28" y1="210.6" x2="1061" y2="210.6" stroke="#8e9e8e" stroke-width="1" />
<line x1="1061" y1="210" x2="1061" y2="571.2" stroke="#217346" stroke-width="1.6" />
<line x1="1213.4" y1="210" x2="1213.4" y2="571.2" stroke="#217346" stroke-width="1.6" />
<line x1="1061" y1="570.5" x2="1213.4" y2="570.5" stroke="#217346" stroke-width="1.6" />
<line x1="1061" y1="249.7" x2="1213.4" y2="249.7" stroke="#217346" stroke-width="1.4" />
<rect x="1211.4" y="568.5" width="4" height="4" fill="#217346" />
<text x="73.4" y="235.5" font-size="13" font-weight="700" fill="#111" text-anchor="middle" textLength="76.6" lengthAdjust="spacingAndGlyphs"  stroke="#111" stroke-width="0.22">Сотрудники</text>
<text x="145.4" y="235.5" font-size="13" font-weight="700" fill="#111" text-anchor="middle" textLength="46.6" lengthAdjust="spacingAndGlyphs"  stroke="#111" stroke-width="0.22">Январь</text>
<text x="204.0" y="235.5" font-size="13" font-weight="700" fill="#111" text-anchor="middle" textLength="54.6" lengthAdjust="spacingAndGlyphs"  stroke="#111" stroke-width="0.22">Февраль</text>
<text x="256.45" y="235.5" font-size="13" font-weight="700" fill="#111" text-anchor="middle" textLength="33.5" lengthAdjust="spacingAndGlyphs"  stroke="#111" stroke-width="0.22">Март</text>
<text x="305.1" y="235.5" font-size="13" font-weight="700" fill="#111" text-anchor="middle" textLength="46.5" lengthAdjust="spacingAndGlyphs"  stroke="#111" stroke-width="0.22">Апрель</text>
<text x="352.1" y="235.5" font-size="13" font-weight="700" fill="#111" text-anchor="middle" textLength="27" lengthAdjust="spacingAndGlyphs"  stroke="#111" stroke-width="0.22">Май</text>
<text x="393.79999999999995" y="235.5" font-size="13" font-weight="700" fill="#111" text-anchor="middle" textLength="35.6" lengthAdjust="spacingAndGlyphs"  stroke="#111" stroke-width="0.22">Июнь</text>
<text x="437.5" y="235.5" font-size="13" font-weight="700" fill="#111" text-anchor="middle" textLength="35.6" lengthAdjust="spacingAndGlyphs"  stroke="#111" stroke-width="0.22">Июль</text>
<text x="483.05" y="235.5" font-size="13" font-weight="700" fill="#111" text-anchor="middle" textLength="39" lengthAdjust="spacingAndGlyphs"  stroke="#111" stroke-width="0.22">Август</text>
<text x="541.25" y="235.5" font-size="13" font-weight="700" fill="#111" text-anchor="middle" textLength="59.8" lengthAdjust="spacingAndGlyphs"  stroke="#111" stroke-width="0.22">Сентябрь</text>
<text x="606.05" y="235.5" font-size="13" font-weight="700" fill="#111" text-anchor="middle" textLength="53" lengthAdjust="spacingAndGlyphs"  stroke="#111" stroke-width="0.22">Октябрь</text>
<text x="664.5999999999999" y="235.5" font-size="13" font-weight="700" fill="#111" text-anchor="middle" textLength="47.7" lengthAdjust="spacingAndGlyphs"  stroke="#111" stroke-width="0.22">Ноябрь</text>
<text x="723.8" y="235.5" font-size="13" font-weight="700" fill="#111" text-anchor="middle" textLength="55" lengthAdjust="spacingAndGlyphs"  stroke="#111" stroke-width="0.22">Декабрь</text>
<text x="831.9" y="235.5" font-size="13" font-weight="700" fill="#111" text-anchor="middle" textLength="113" lengthAdjust="spacingAndGlyphs"  stroke="#111" stroke-width="0.22">Спарклайн линия</text>
<text x="983.4" y="226" font-size="13" font-weight="700" fill="#111" text-anchor="middle" textLength="69.5" lengthAdjust="spacingAndGlyphs"  stroke="#111" stroke-width="0.22">Спарклайн</text>
<text x="983.4" y="245" font-size="13" font-weight="700" fill="#111" text-anchor="middle" textLength="82.8" lengthAdjust="spacingAndGlyphs"  stroke="#111" stroke-width="0.22">гистограмма</text>
<text x="1136.8" y="226" font-size="13" font-weight="700" fill="#111" text-anchor="middle" textLength="71.7" lengthAdjust="spacingAndGlyphs"  stroke="#111" stroke-width="0.22">Спарклайн</text>
<text x="1136.5" y="245" font-size="13" font-weight="700" fill="#111" text-anchor="middle" textLength="137" lengthAdjust="spacingAndGlyphs"  stroke="#111" stroke-width="0.22">выигрыш/проигрыш</text>
<text x="31.6" y="285.5" font-size="13.3" fill="#111" text-anchor="start" textLength="62.2" lengthAdjust="spacingAndGlyphs" stroke="#111" stroke-width="0.3">Бармалей</text>
<text x="168.7" y="285.5" font-size="12.8" fill="#111" text-anchor="end" stroke="#111" stroke-width="0.35">687</text>
<text x="231.7" y="285.5" font-size="12.8" fill="#111" text-anchor="end" stroke="#111" stroke-width="0.35">-883</text>
<text x="273.59999999999997" y="285.5" font-size="12.8" fill="#111" text-anchor="end" stroke="#111" stroke-width="0.35">-259</text>
<text x="329.0" y="285.5" font-size="12.8" fill="#111" text-anchor="end" stroke="#111" stroke-width="0.35">-659</text>
<text x="367.59999999999997" y="285.5" font-size="12.8" fill="#111" text-anchor="end" stroke="#111" stroke-width="0.35">225</text>
<text x="412.4" y="285.5" font-size="12.8" fill="#111" text-anchor="end" stroke="#111" stroke-width="0.35">227</text>
<text x="455.0" y="285.5" font-size="12.8" fill="#111" text-anchor="end" stroke="#111" stroke-width="0.35">133</text>
<text x="503.5" y="285.5" font-size="12.8" fill="#111" text-anchor="end" stroke="#111" stroke-width="0.35">411</text>
<text x="571.4000000000001" y="285.5" font-size="12.8" fill="#111" text-anchor="end" stroke="#111" stroke-width="0.35">236</text>
<text x="633.1" y="285.5" font-size="12.8" fill="#111" text-anchor="end" stroke="#111" stroke-width="0.35">-115</text>
<text x="688.5" y="285.5" font-size="12.8" fill="#111" text-anchor="end" stroke="#111" stroke-width="0.35">969</text>
<text x="751.5" y="285.5" font-size="12.8" fill="#111" text-anchor="end" stroke="#111" stroke-width="0.35">644</text>
<polyline points="763.00,258.73 775.36,286.20 787.73,275.28 800.09,282.28 812.45,266.82 824.82,266.78 837.18,268.43 849.55,263.56 861.91,266.62 874.27,272.76 886.64,253.80 899.00,259.49" fill="none" stroke="#1c4229" stroke-width="2.3" stroke-linejoin="round"/>
<path d="M763.00 255.43 L766.30 258.73 L763.00 262.03 L759.70 258.73 Z" fill="#c2183c"/>
<path d="M775.36 282.90 L778.66 286.20 L775.36 289.50 L772.06 286.20 Z" fill="#c2183c"/>
<path d="M787.73 271.98 L791.03 275.28 L787.73 278.58 L784.43 275.28 Z" fill="#c2183c"/>
<path d="M800.09 278.98 L803.39 282.28 L800.09 285.58 L796.79 282.28 Z" fill="#c2183c"/>
<path d="M812.45 263.52 L815.75 266.82 L812.45 270.12 L809.15 266.82 Z" fill="#c2183c"/>
<path d="M824.82 263.48 L828.12 266.78 L824.82 270.08 L821.52 266.78 Z" fill="#c2183c"/>
<path d="M837.18 265.13 L840.48 268.43 L837.18 271.73 L833.88 268.43 Z" fill="#c2183c"/>
<path d="M849.55 260.26 L852.85 263.56 L849.55 266.86 L846.25 263.56 Z" fill="#c2183c"/>
<path d="M861.91 263.32 L865.21 266.62 L861.91 269.92 L858.61 266.62 Z" fill="#c2183c"/>
<path d="M874.27 269.46 L877.57 272.76 L874.27 276.06 L870.97 272.76 Z" fill="#c2183c"/>
<path d="M886.64 250.50 L889.94 253.80 L886.64 257.10 L883.34 253.80 Z" fill="#c2183c"/>
<path d="M899.00 256.19 L902.30 259.49 L899.00 262.79 L895.70 259.49 Z" fill="#c2183c"/>
<rect x="911.50" y="258.73" width="8.8" height="12.02" fill="#2672b8" />
<rect x="923.93" y="270.75" width="8.8" height="15.45" fill="#a6a6a6" />
<rect x="936.35" y="270.75" width="8.8" height="4.53" fill="#a6a6a6" />
<rect x="948.78" y="270.75" width="8.8" height="11.53" fill="#a6a6a6" />
<rect x="961.21" y="266.82" width="8.8" height="3.94" fill="#2672b8" />
<rect x="973.64" y="266.78" width="8.8" height="3.97" fill="#2672b8" />
<rect x="986.06" y="268.43" width="8.8" height="2.33" fill="#2672b8" />
<rect x="998.49" y="263.56" width="8.8" height="7.19" fill="#2672b8" />
<rect x="1010.92" y="266.62" width="8.8" height="4.13" fill="#2672b8" />
<rect x="1023.35" y="270.75" width="8.8" height="2.01" fill="#a6a6a6" />
<rect x="1035.77" y="253.80" width="8.8" height="16.95" fill="#2672b8" />
<rect x="1048.20" y="259.49" width="8.8" height="11.27" fill="#2672b8" />
<rect x="1064.40" y="253.7" width="9" height="16" fill="#24418a" />
<rect x="1076.84" y="269.7" width="9" height="16" fill="#b31836" />
<rect x="1089.27" y="269.7" width="9" height="16" fill="#b31836" />
<rect x="1101.71" y="269.7" width="9" height="16" fill="#b31836" />
<rect x="1114.15" y="253.7" width="9" height="16" fill="#24418a" />
<rect x="1126.58" y="253.7" width="9" height="16" fill="#24418a" />
<rect x="1139.02" y="253.7" width="9" height="16" fill="#24418a" />
<rect x="1151.45" y="253.7" width="9" height="16" fill="#24418a" />
<rect x="1163.89" y="253.7" width="9" height="16" fill="#24418a" />
<rect x="1176.33" y="269.7" width="9" height="16" fill="#b31836" />
<rect x="1188.76" y="253.7" width="9" height="16" fill="#24418a" />
<rect x="1201.20" y="253.7" width="9" height="16" fill="#24418a" />
<text x="31.6" y="325.6" font-size="13.3" fill="#111" text-anchor="start" textLength="58.6" lengthAdjust="spacingAndGlyphs" stroke="#111" stroke-width="0.3">Буратино</text>
<text x="168.7" y="325.6" font-size="12.8" fill="#111" text-anchor="end" stroke="#111" stroke-width="0.35">-745</text>
<text x="231.7" y="325.6" font-size="12.8" fill="#111" text-anchor="end" stroke="#111" stroke-width="0.35">609</text>
<text x="273.59999999999997" y="325.6" font-size="12.8" fill="#111" text-anchor="end" stroke="#111" stroke-width="0.35">-368</text>
<text x="329.0" y="325.6" font-size="12.8" fill="#111" text-anchor="end" stroke="#111" stroke-width="0.35">-206</text>
<text x="367.59999999999997" y="325.6" font-size="12.8" fill="#111" text-anchor="end" stroke="#111" stroke-width="0.35">102</text>
<text x="412.4" y="325.6" font-size="12.8" fill="#111" text-anchor="end" stroke="#111" stroke-width="0.35">383</text>
<text x="455.0" y="325.6" font-size="12.8" fill="#111" text-anchor="end" stroke="#111" stroke-width="0.35">805</text>
<text x="503.5" y="325.6" font-size="12.8" fill="#111" text-anchor="end" stroke="#111" stroke-width="0.35">142</text>
<text x="571.4000000000001" y="325.6" font-size="12.8" fill="#111" text-anchor="end" stroke="#111" stroke-width="0.35">-901</text>
<text x="633.1" y="325.6" font-size="12.8" fill="#111" text-anchor="end" stroke="#111" stroke-width="0.35">13</text>
<text x="688.5" y="325.6" font-size="12.8" fill="#111" text-anchor="end" stroke="#111" stroke-width="0.35">-929</text>
<text x="751.5" y="325.6" font-size="12.8" fill="#111" text-anchor="end" stroke="#111" stroke-width="0.35">-904</text>
<polyline points="763.00,322.86 775.36,297.56 787.73,315.82 800.09,312.79 812.45,307.04 824.82,301.79 837.18,293.90 849.55,306.29 861.91,325.78 874.27,308.70 886.64,326.30 899.00,325.83" fill="none" stroke="#1c4229" stroke-width="2.3" stroke-linejoin="round"/>
<path d="M763.00 319.56 L766.30 322.86 L763.00 326.16 L759.70 322.86 Z" fill="#c2183c"/>
<path d="M775.36 294.26 L778.66 297.56 L775.36 300.86 L772.06 297.56 Z" fill="#c2183c"/>
<path d="M787.73 312.52 L791.03 315.82 L787.73 319.12 L784.43 315.82 Z" fill="#c2183c"/>
<path d="M800.09 309.49 L803.39 312.79 L800.09 316.09 L796.79 312.79 Z" fill="#c2183c"/>
<path d="M812.45 303.74 L815.75 307.04 L812.45 310.34 L809.15 307.04 Z" fill="#c2183c"/>
<path d="M824.82 298.49 L828.12 301.79 L824.82 305.09 L821.52 301.79 Z" fill="#c2183c"/>
<path d="M837.18 290.60 L840.48 293.90 L837.18 297.20 L833.88 293.90 Z" fill="#c2183c"/>
<path d="M849.55 302.99 L852.85 306.29 L849.55 309.59 L846.25 306.29 Z" fill="#c2183c"/>
<path d="M861.91 322.48 L865.21 325.78 L861.91 329.08 L858.61 325.78 Z" fill="#c2183c"/>
<path d="M874.27 305.40 L877.57 308.70 L874.27 312.00 L870.97 308.70 Z" fill="#c2183c"/>
<path d="M886.64 323.00 L889.94 326.30 L886.64 329.60 L883.34 326.30 Z" fill="#c2183c"/>
<path d="M899.00 322.53 L902.30 325.83 L899.00 329.13 L895.70 325.83 Z" fill="#c2183c"/>
<rect x="911.50" y="308.94" width="8.8" height="13.92" fill="#a6a6a6" />
<rect x="923.93" y="297.56" width="8.8" height="11.38" fill="#2672b8" />
<rect x="936.35" y="308.94" width="8.8" height="6.88" fill="#a6a6a6" />
<rect x="948.78" y="308.94" width="8.8" height="3.85" fill="#a6a6a6" />
<rect x="961.21" y="307.04" width="8.8" height="1.91" fill="#2672b8" />
<rect x="973.64" y="301.79" width="8.8" height="7.16" fill="#2672b8" />
<rect x="986.06" y="293.90" width="8.8" height="15.04" fill="#2672b8" />
<rect x="998.49" y="306.29" width="8.8" height="2.65" fill="#2672b8" />
<rect x="1010.92" y="308.94" width="8.8" height="16.84" fill="#a6a6a6" />
<rect x="1023.35" y="307.74" width="8.8" height="1.20" fill="#2672b8" />
<rect x="1035.77" y="308.94" width="8.8" height="17.36" fill="#a6a6a6" />
<rect x="1048.20" y="308.94" width="8.8" height="16.89" fill="#a6a6a6" />
<rect x="1064.40" y="309.8" width="9" height="16" fill="#b31836" />
<rect x="1076.84" y="293.8" width="9" height="16" fill="#24418a" />
<rect x="1089.27" y="309.8" width="9" height="16" fill="#b31836" />
<rect x="1101.71" y="309.8" width="9" height="16" fill="#b31836" />
<rect x="1114.15" y="293.8" width="9" height="16" fill="#24418a" />
<rect x="1126.58" y="293.8" width="9" height="16" fill="#24418a" />
<rect x="1139.02" y="293.8" width="9" height="16" fill="#24418a" />
<rect x="1151.45" y="293.8" width="9" height="16" fill="#24418a" />
<rect x="1163.89" y="309.8" width="9" height="16" fill="#b31836" />
<rect x="1176.33" y="293.8" width="9" height="16" fill="#24418a" />
<rect x="1188.76" y="309.8" width="9" height="16" fill="#b31836" />
<rect x="1201.20" y="309.8" width="9" height="16" fill="#b31836" />
<text x="31.6" y="365.7" font-size="13.3" fill="#111" text-anchor="start" textLength="81.8" lengthAdjust="spacingAndGlyphs" stroke="#111" stroke-width="0.3">Дюймовочка</text>
<text x="168.7" y="365.7" font-size="12.8" fill="#111" text-anchor="end" stroke="#111" stroke-width="0.35">-261</text>
<text x="231.7" y="365.7" font-size="12.8" fill="#111" text-anchor="end" stroke="#111" stroke-width="0.35">573</text>
<text x="273.59999999999997" y="365.7" font-size="12.8" fill="#111" text-anchor="end" stroke="#111" stroke-width="0.35">-55</text>
<text x="329.0" y="365.7" font-size="12.8" fill="#111" text-anchor="end" stroke="#111" stroke-width="0.35">-199</text>
<text x="367.59999999999997" y="365.7" font-size="12.8" fill="#111" text-anchor="end" stroke="#111" stroke-width="0.35">820</text>
<text x="412.4" y="365.7" font-size="12.8" fill="#111" text-anchor="end" stroke="#111" stroke-width="0.35">733</text>
<text x="455.0" y="365.7" font-size="12.8" fill="#111" text-anchor="end" stroke="#111" stroke-width="0.35">-861</text>
<text x="503.5" y="365.7" font-size="12.8" fill="#111" text-anchor="end" stroke="#111" stroke-width="0.35">-27</text>
<text x="571.4000000000001" y="365.7" font-size="12.8" fill="#111" text-anchor="end" stroke="#111" stroke-width="0.35">-199</text>
<text x="633.1" y="365.7" font-size="12.8" fill="#111" text-anchor="end" stroke="#111" stroke-width="0.35">-40</text>
<text x="688.5" y="365.7" font-size="12.8" fill="#111" text-anchor="end" stroke="#111" stroke-width="0.35">-700</text>
<text x="751.5" y="365.7" font-size="12.8" fill="#111" text-anchor="end" stroke="#111" stroke-width="0.35">-208</text>
<polyline points="763.00,354.84 775.36,338.76 787.73,350.86 800.09,353.64 812.45,334.00 824.82,335.68 837.18,366.40 849.55,350.33 861.91,353.64 874.27,350.58 886.64,363.30 899.00,353.81" fill="none" stroke="#1c4229" stroke-width="2.3" stroke-linejoin="round"/>
<path d="M763.00 351.54 L766.30 354.84 L763.00 358.14 L759.70 354.84 Z" fill="#c2183c"/>
<path d="M775.36 335.46 L778.66 338.76 L775.36 342.06 L772.06 338.76 Z" fill="#c2183c"/>
<path d="M787.73 347.56 L791.03 350.86 L787.73 354.16 L784.43 350.86 Z" fill="#c2183c"/>
<path d="M800.09 350.34 L803.39 353.64 L800.09 356.94 L796.79 353.64 Z" fill="#c2183c"/>
<path d="M812.45 330.70 L815.75 334.00 L812.45 337.30 L809.15 334.00 Z" fill="#c2183c"/>
<path d="M824.82 332.38 L828.12 335.68 L824.82 338.98 L821.52 335.68 Z" fill="#c2183c"/>
<path d="M837.18 363.10 L840.48 366.40 L837.18 369.70 L833.88 366.40 Z" fill="#c2183c"/>
<path d="M849.55 347.03 L852.85 350.33 L849.55 353.63 L846.25 350.33 Z" fill="#c2183c"/>
<path d="M861.91 350.34 L865.21 353.64 L861.91 356.94 L858.61 353.64 Z" fill="#c2183c"/>
<path d="M874.27 347.28 L877.57 350.58 L874.27 353.88 L870.97 350.58 Z" fill="#c2183c"/>
<path d="M886.64 360.00 L889.94 363.30 L886.64 366.60 L883.34 363.30 Z" fill="#c2183c"/>
<path d="M899.00 350.51 L902.30 353.81 L899.00 357.11 L895.70 353.81 Z" fill="#c2183c"/>
<rect x="911.50" y="349.80" width="8.8" height="5.03" fill="#a6a6a6" />
<rect x="923.93" y="338.76" width="8.8" height="11.04" fill="#2672b8" />
<rect x="936.35" y="349.80" width="8.8" height="1.20" fill="#a6a6a6" />
<rect x="948.78" y="349.80" width="8.8" height="3.84" fill="#a6a6a6" />
<rect x="961.21" y="334.00" width="8.8" height="15.80" fill="#2672b8" />
<rect x="973.64" y="335.68" width="8.8" height="14.13" fill="#2672b8" />
<rect x="986.06" y="349.80" width="8.8" height="16.60" fill="#a6a6a6" />
<rect x="998.49" y="349.80" width="8.8" height="1.20" fill="#a6a6a6" />
<rect x="1010.92" y="349.80" width="8.8" height="3.84" fill="#a6a6a6" />
<rect x="1023.35" y="349.80" width="8.8" height="1.20" fill="#a6a6a6" />
<rect x="1035.77" y="349.80" width="8.8" height="13.49" fill="#a6a6a6" />
<rect x="1048.20" y="349.80" width="8.8" height="4.01" fill="#a6a6a6" />
<rect x="1064.40" y="349.9" width="9" height="16" fill="#b31836" />
<rect x="1076.84" y="333.9" width="9" height="16" fill="#24418a" />
<rect x="1089.27" y="349.9" width="9" height="16" fill="#b31836" />
<rect x="1101.71" y="349.9" width="9" height="16" fill="#b31836" />
<rect x="1114.15" y="333.9" width="9" height="16" fill="#24418a" />
<rect x="1126.58" y="333.9" width="9" height="16" fill="#24418a" />
<rect x="1139.02" y="349.9" width="9" height="16" fill="#b31836" />
<rect x="1151.45" y="349.9" width="9" height="16" fill="#b31836" />
<rect x="1163.89" y="349.9" width="9" height="16" fill="#b31836" />
<rect x="1176.33" y="349.9" width="9" height="16" fill="#b31836" />
<rect x="1188.76" y="349.9" width="9" height="16" fill="#b31836" />
<rect x="1201.20" y="349.9" width="9" height="16" fill="#b31836" />
<text x="31.6" y="405.8" font-size="13.3" fill="#111" text-anchor="start" textLength="52.8" lengthAdjust="spacingAndGlyphs" stroke="#111" stroke-width="0.3">Золушка</text>
<text x="168.7" y="405.8" font-size="12.8" fill="#111" text-anchor="end" stroke="#111" stroke-width="0.35">22</text>
<text x="231.7" y="405.8" font-size="12.8" fill="#111" text-anchor="end" stroke="#111" stroke-width="0.35">756</text>
<text x="273.59999999999997" y="405.8" font-size="12.8" fill="#111" text-anchor="end" stroke="#111" stroke-width="0.35">-57</text>
<text x="329.0" y="405.8" font-size="12.8" fill="#111" text-anchor="end" stroke="#111" stroke-width="0.35">752</text>
<text x="367.59999999999997" y="405.8" font-size="12.8" fill="#111" text-anchor="end" stroke="#111" stroke-width="0.35">-283</text>
<text x="412.4" y="405.8" font-size="12.8" fill="#111" text-anchor="end" stroke="#111" stroke-width="0.35">346</text>
<text x="455.0" y="405.8" font-size="12.8" fill="#111" text-anchor="end" stroke="#111" stroke-width="0.35">599</text>
<text x="503.5" y="405.8" font-size="12.8" fill="#111" text-anchor="end" stroke="#111" stroke-width="0.35">-263</text>
<text x="571.4000000000001" y="405.8" font-size="12.8" fill="#111" text-anchor="end" stroke="#111" stroke-width="0.35">-296</text>
<text x="633.1" y="405.8" font-size="12.8" fill="#111" text-anchor="end" stroke="#111" stroke-width="0.35">201</text>
<text x="688.5" y="405.8" font-size="12.8" fill="#111" text-anchor="end" stroke="#111" stroke-width="0.35">722</text>
<text x="751.5" y="405.8" font-size="12.8" fill="#111" text-anchor="end" stroke="#111" stroke-width="0.35">971</text>
<polyline points="763.00,398.37 775.36,379.60 787.73,400.39 800.09,379.70 812.45,406.17 824.82,390.08 837.18,383.61 849.55,405.66 861.91,406.50 874.27,393.79 886.64,380.47 899.00,374.10" fill="none" stroke="#1c4229" stroke-width="2.3" stroke-linejoin="round"/>
<path d="M763.00 395.07 L766.30 398.37 L763.00 401.67 L759.70 398.37 Z" fill="#c2183c"/>
<path d="M775.36 376.30 L778.66 379.60 L775.36 382.90 L772.06 379.60 Z" fill="#c2183c"/>
<path d="M787.73 397.09 L791.03 400.39 L787.73 403.69 L784.43 400.39 Z" fill="#c2183c"/>
<path d="M800.09 376.40 L803.39 379.70 L800.09 383.00 L796.79 379.70 Z" fill="#c2183c"/>
<path d="M812.45 402.87 L815.75 406.17 L812.45 409.47 L809.15 406.17 Z" fill="#c2183c"/>
<path d="M824.82 386.78 L828.12 390.08 L824.82 393.38 L821.52 390.08 Z" fill="#c2183c"/>
<path d="M837.18 380.31 L840.48 383.61 L837.18 386.91 L833.88 383.61 Z" fill="#c2183c"/>
<path d="M849.55 402.36 L852.85 405.66 L849.55 408.96 L846.25 405.66 Z" fill="#c2183c"/>
<path d="M861.91 403.20 L865.21 406.50 L861.91 409.80 L858.61 406.50 Z" fill="#c2183c"/>
<path d="M874.27 390.49 L877.57 393.79 L874.27 397.09 L870.97 393.79 Z" fill="#c2183c"/>
<path d="M886.64 377.17 L889.94 380.47 L886.64 383.77 L883.34 380.47 Z" fill="#c2183c"/>
<path d="M899.00 370.80 L902.30 374.10 L899.00 377.40 L895.70 374.10 Z" fill="#c2183c"/>
<rect x="911.50" y="397.73" width="8.8" height="1.20" fill="#2672b8" />
<rect x="923.93" y="379.60" width="8.8" height="19.33" fill="#2672b8" />
<rect x="936.35" y="398.93" width="8.8" height="1.46" fill="#a6a6a6" />
<rect x="948.78" y="379.70" width="8.8" height="19.23" fill="#2672b8" />
<rect x="961.21" y="398.93" width="8.8" height="7.24" fill="#a6a6a6" />
<rect x="973.64" y="390.08" width="8.8" height="8.85" fill="#2672b8" />
<rect x="986.06" y="383.61" width="8.8" height="15.32" fill="#2672b8" />
<rect x="998.49" y="398.93" width="8.8" height="6.73" fill="#a6a6a6" />
<rect x="1010.92" y="398.93" width="8.8" height="7.57" fill="#a6a6a6" />
<rect x="1023.35" y="393.79" width="8.8" height="5.14" fill="#2672b8" />
<rect x="1035.77" y="380.47" width="8.8" height="18.46" fill="#2672b8" />
<rect x="1048.20" y="374.10" width="8.8" height="24.83" fill="#2672b8" />
<rect x="1064.40" y="374.0" width="9" height="16" fill="#24418a" />
<rect x="1076.84" y="374.0" width="9" height="16" fill="#24418a" />
<rect x="1089.27" y="390.0" width="9" height="16" fill="#b31836" />
<rect x="1101.71" y="374.0" width="9" height="16" fill="#24418a" />
<rect x="1114.15" y="390.0" width="9" height="16" fill="#b31836" />
<rect x="1126.58" y="374.0" width="9" height="16" fill="#24418a" />
<rect x="1139.02" y="374.0" width="9" height="16" fill="#24418a" />
<rect x="1151.45" y="390.0" width="9" height="16" fill="#b31836" />
<rect x="1163.89" y="390.0" width="9" height="16" fill="#b31836" />
<rect x="1176.33" y="374.0" width="9" height="16" fill="#24418a" />
<rect x="1188.76" y="374.0" width="9" height="16" fill="#24418a" />
<rect x="1201.20" y="374.0" width="9" height="16" fill="#24418a" />
<text x="31.6" y="445.90000000000003" font-size="13.3" fill="#111" text-anchor="start" textLength="40.5" lengthAdjust="spacingAndGlyphs" stroke="#111" stroke-width="0.3">Кащей</text>
<text x="168.7" y="445.90000000000003" font-size="12.8" fill="#111" text-anchor="end" stroke="#111" stroke-width="0.35">-526</text>
<text x="231.7" y="445.90000000000003" font-size="12.8" fill="#111" text-anchor="end" stroke="#111" stroke-width="0.35">759</text>
<text x="273.59999999999997" y="445.90000000000003" font-size="12.8" fill="#111" text-anchor="end" stroke="#111" stroke-width="0.35">-38</text>
<text x="329.0" y="445.90000000000003" font-size="12.8" fill="#111" text-anchor="end" stroke="#111" stroke-width="0.35">-303</text>
<text x="367.59999999999997" y="445.90000000000003" font-size="12.8" fill="#111" text-anchor="end" stroke="#111" stroke-width="0.35">-318</text>
<text x="412.4" y="445.90000000000003" font-size="12.8" fill="#111" text-anchor="end" stroke="#111" stroke-width="0.35">364</text>
<text x="455.0" y="445.90000000000003" font-size="12.8" fill="#111" text-anchor="end" stroke="#111" stroke-width="0.35">-325</text>
<text x="503.5" y="445.90000000000003" font-size="12.8" fill="#111" text-anchor="end" stroke="#111" stroke-width="0.35">854</text>
<text x="571.4000000000001" y="445.90000000000003" font-size="12.8" fill="#111" text-anchor="end" stroke="#111" stroke-width="0.35">972</text>
<text x="633.1" y="445.90000000000003" font-size="12.8" fill="#111" text-anchor="end" stroke="#111" stroke-width="0.35">465</text>
<text x="688.5" y="445.90000000000003" font-size="12.8" fill="#111" text-anchor="end" stroke="#111" stroke-width="0.35">25</text>
<text x="751.5" y="445.90000000000003" font-size="12.8" fill="#111" text-anchor="end" stroke="#111" stroke-width="0.35">69</text>
<polyline points="763.00,446.60 775.36,418.81 787.73,436.05 800.09,441.78 812.45,442.10 824.82,427.35 837.18,442.25 849.55,416.75 861.91,414.20 874.27,425.17 886.64,434.68 899.00,433.73" fill="none" stroke="#1c4229" stroke-width="2.3" stroke-linejoin="round"/>
<path d="M763.00 443.30 L766.30 446.60 L763.00 449.90 L759.70 446.60 Z" fill="#c2183c"/>
<path d="M775.36 415.51 L778.66 418.81 L775.36 422.11 L772.06 418.81 Z" fill="#c2183c"/>
<path d="M787.73 432.75 L791.03 436.05 L787.73 439.35 L784.43 436.05 Z" fill="#c2183c"/>
<path d="M800.09 438.48 L803.39 441.78 L800.09 445.08 L796.79 441.78 Z" fill="#c2183c"/>
<path d="M812.45 438.80 L815.75 442.10 L812.45 445.40 L809.15 442.10 Z" fill="#c2183c"/>
<path d="M824.82 424.05 L828.12 427.35 L824.82 430.65 L821.52 427.35 Z" fill="#c2183c"/>
<path d="M837.18 438.95 L840.48 442.25 L837.18 445.55 L833.88 442.25 Z" fill="#c2183c"/>
<path d="M849.55 413.45 L852.85 416.75 L849.55 420.05 L846.25 416.75 Z" fill="#c2183c"/>
<path d="M861.91 410.90 L865.21 414.20 L861.91 417.50 L858.61 414.20 Z" fill="#c2183c"/>
<path d="M874.27 421.87 L877.57 425.17 L874.27 428.47 L870.97 425.17 Z" fill="#c2183c"/>
<path d="M886.64 431.38 L889.94 434.68 L886.64 437.98 L883.34 434.68 Z" fill="#c2183c"/>
<path d="M899.00 430.43 L902.30 433.73 L899.00 437.03 L895.70 433.73 Z" fill="#c2183c"/>
<rect x="911.50" y="435.22" width="8.8" height="11.38" fill="#a6a6a6" />
<rect x="923.93" y="418.81" width="8.8" height="16.42" fill="#2672b8" />
<rect x="936.35" y="435.22" width="8.8" height="1.20" fill="#a6a6a6" />
<rect x="948.78" y="435.22" width="8.8" height="6.55" fill="#a6a6a6" />
<rect x="961.21" y="435.22" width="8.8" height="6.88" fill="#a6a6a6" />
<rect x="973.64" y="427.35" width="8.8" height="7.87" fill="#2672b8" />
<rect x="986.06" y="435.22" width="8.8" height="7.03" fill="#a6a6a6" />
<rect x="998.49" y="416.75" width="8.8" height="18.47" fill="#2672b8" />
<rect x="1010.92" y="414.20" width="8.8" height="21.02" fill="#2672b8" />
<rect x="1023.35" y="425.17" width="8.8" height="10.06" fill="#2672b8" />
<rect x="1035.77" y="434.02" width="8.8" height="1.20" fill="#2672b8" />
<rect x="1048.20" y="433.73" width="8.8" height="1.49" fill="#2672b8" />
<rect x="1064.40" y="430.1" width="9" height="16" fill="#b31836" />
<rect x="1076.84" y="414.1" width="9" height="16" fill="#24418a" />
<rect x="1089.27" y="430.1" width="9" height="16" fill="#b31836" />
<rect x="1101.71" y="430.1" width="9" height="16" fill="#b31836" />
<rect x="1114.15" y="430.1" width="9" height="16" fill="#b31836" />
<rect x="1126.58" y="414.1" width="9" height="16" fill="#24418a" />
<rect x="1139.02" y="430.1" width="9" height="16" fill="#b31836" />
<rect x="1151.45" y="414.1" width="9" height="16" fill="#24418a" />
<rect x="1163.89" y="414.1" width="9" height="16" fill="#24418a" />
<rect x="1176.33" y="414.1" width="9" height="16" fill="#24418a" />
<rect x="1188.76" y="414.1" width="9" height="16" fill="#24418a" />
<rect x="1201.20" y="414.1" width="9" height="16" fill="#24418a" />
<text x="31.6" y="486.0" font-size="13.3" fill="#111" text-anchor="start" textLength="54.3" lengthAdjust="spacingAndGlyphs" stroke="#111" stroke-width="0.3">Колобок</text>
<text x="168.7" y="486.0" font-size="12.8" fill="#111" text-anchor="end" stroke="#111" stroke-width="0.35">-201</text>
<text x="231.7" y="486.0" font-size="12.8" fill="#111" text-anchor="end" stroke="#111" stroke-width="0.35">353</text>
<text x="273.59999999999997" y="486.0" font-size="12.8" fill="#111" text-anchor="end" stroke="#111" stroke-width="0.35">16</text>
<text x="329.0" y="486.0" font-size="12.8" fill="#111" text-anchor="end" stroke="#111" stroke-width="0.35">92</text>
<text x="367.59999999999997" y="486.0" font-size="12.8" fill="#111" text-anchor="end" stroke="#111" stroke-width="0.35">812</text>
<text x="412.4" y="486.0" font-size="12.8" fill="#111" text-anchor="end" stroke="#111" stroke-width="0.35">486</text>
<text x="455.0" y="486.0" font-size="12.8" fill="#111" text-anchor="end" stroke="#111" stroke-width="0.35">-721</text>
<text x="503.5" y="486.0" font-size="12.8" fill="#111" text-anchor="end" stroke="#111" stroke-width="0.35">631</text>
<text x="571.4000000000001" y="486.0" font-size="12.8" fill="#111" text-anchor="end" stroke="#111" stroke-width="0.35">408</text>
<text x="633.1" y="486.0" font-size="12.8" fill="#111" text-anchor="end" stroke="#111" stroke-width="0.35">-63</text>
<text x="688.5" y="486.0" font-size="12.8" fill="#111" text-anchor="end" stroke="#111" stroke-width="0.35">889</text>
<text x="751.5" y="486.0" font-size="12.8" fill="#111" text-anchor="end" stroke="#111" stroke-width="0.35">996</text>
<polyline points="763.00,476.89 775.36,466.43 787.73,472.79 800.09,471.36 812.45,457.77 824.82,463.92 837.18,486.70 849.55,461.19 861.91,465.40 874.27,474.28 886.64,456.32 899.00,454.30" fill="none" stroke="#1c4229" stroke-width="2.3" stroke-linejoin="round"/>
<path d="M763.00 473.59 L766.30 476.89 L763.00 480.19 L759.70 476.89 Z" fill="#c2183c"/>
<path d="M775.36 463.13 L778.66 466.43 L775.36 469.73 L772.06 466.43 Z" fill="#c2183c"/>
<path d="M787.73 469.49 L791.03 472.79 L787.73 476.09 L784.43 472.79 Z" fill="#c2183c"/>
<path d="M800.09 468.06 L803.39 471.36 L800.09 474.66 L796.79 471.36 Z" fill="#c2183c"/>
<path d="M812.45 454.47 L815.75 457.77 L812.45 461.07 L809.15 457.77 Z" fill="#c2183c"/>
<path d="M824.82 460.62 L828.12 463.92 L824.82 467.22 L821.52 463.92 Z" fill="#c2183c"/>
<path d="M837.18 483.40 L840.48 486.70 L837.18 490.00 L833.88 486.70 Z" fill="#c2183c"/>
<path d="M849.55 457.89 L852.85 461.19 L849.55 464.49 L846.25 461.19 Z" fill="#c2183c"/>
<path d="M861.91 462.10 L865.21 465.40 L861.91 468.70 L858.61 465.40 Z" fill="#c2183c"/>
<path d="M874.27 470.98 L877.57 474.28 L874.27 477.58 L870.97 474.28 Z" fill="#c2183c"/>
<path d="M886.64 453.02 L889.94 456.32 L886.64 459.62 L883.34 456.32 Z" fill="#c2183c"/>
<path d="M899.00 451.00 L902.30 454.30 L899.00 457.60 L895.70 454.30 Z" fill="#c2183c"/>
<rect x="911.50" y="473.09" width="8.8" height="3.79" fill="#a6a6a6" />
<rect x="923.93" y="466.43" width="8.8" height="6.66" fill="#2672b8" />
<rect x="936.35" y="471.89" width="8.8" height="1.20" fill="#2672b8" />
<rect x="948.78" y="471.36" width="8.8" height="1.74" fill="#2672b8" />
<rect x="961.21" y="457.77" width="8.8" height="15.32" fill="#2672b8" />
<rect x="973.64" y="463.92" width="8.8" height="9.17" fill="#2672b8" />
<rect x="986.06" y="473.09" width="8.8" height="13.61" fill="#a6a6a6" />
<rect x="998.49" y="461.19" width="8.8" height="11.91" fill="#2672b8" />
<rect x="1010.92" y="465.40" width="8.8" height="7.70" fill="#2672b8" />
<rect x="1023.35" y="473.09" width="8.8" height="1.20" fill="#a6a6a6" />
<rect x="1035.77" y="456.32" width="8.8" height="16.78" fill="#2672b8" />
<rect x="1048.20" y="454.30" width="8.8" height="18.79" fill="#2672b8" />
<rect x="1064.40" y="470.2" width="9" height="16" fill="#b31836" />
<rect x="1076.84" y="454.2" width="9" height="16" fill="#24418a" />
<rect x="1089.27" y="454.2" width="9" height="16" fill="#24418a" />
<rect x="1101.71" y="454.2" width="9" height="16" fill="#24418a" />
<rect x="1114.15" y="454.2" width="9" height="16" fill="#24418a" />
<rect x="1126.58" y="454.2" width="9" height="16" fill="#24418a" />
<rect x="1139.02" y="470.2" width="9" height="16" fill="#b31836" />
<rect x="1151.45" y="454.2" width="9" height="16" fill="#24418a" />
<rect x="1163.89" y="454.2" width="9" height="16" fill="#24418a" />
<rect x="1176.33" y="470.2" width="9" height="16" fill="#b31836" />
<rect x="1188.76" y="454.2" width="9" height="16" fill="#24418a" />
<rect x="1201.20" y="454.2" width="9" height="16" fill="#24418a" />
<text x="31.6" y="526.1" font-size="13.3" fill="#111" text-anchor="start" textLength="63" lengthAdjust="spacingAndGlyphs" stroke="#111" stroke-width="0.3">Чиполино</text>
<text x="168.7" y="526.1" font-size="12.8" fill="#111" text-anchor="end" stroke="#111" stroke-width="0.35">-576</text>
<text x="231.7" y="526.1" font-size="12.8" fill="#111" text-anchor="end" stroke="#111" stroke-width="0.35">641</text>
<text x="273.59999999999997" y="526.1" font-size="12.8" fill="#111" text-anchor="end" stroke="#111" stroke-width="0.35">563</text>
<text x="329.0" y="526.1" font-size="12.8" fill="#111" text-anchor="end" stroke="#111" stroke-width="0.35">-926</text>
<text x="367.59999999999997" y="526.1" font-size="12.8" fill="#111" text-anchor="end" stroke="#111" stroke-width="0.35">787</text>
<text x="412.4" y="526.1" font-size="12.8" fill="#111" text-anchor="end" stroke="#111" stroke-width="0.35">59</text>
<text x="455.0" y="526.1" font-size="12.8" fill="#111" text-anchor="end" stroke="#111" stroke-width="0.35">-210</text>
<text x="503.5" y="526.1" font-size="12.8" fill="#111" text-anchor="end" stroke="#111" stroke-width="0.35">-670</text>
<text x="571.4000000000001" y="526.1" font-size="12.8" fill="#111" text-anchor="end" stroke="#111" stroke-width="0.35">682</text>
<text x="633.1" y="526.1" font-size="12.8" fill="#111" text-anchor="end" stroke="#111" stroke-width="0.35">-760</text>
<text x="688.5" y="526.1" font-size="12.8" fill="#111" text-anchor="end" stroke="#111" stroke-width="0.35">65</text>
<text x="751.5" y="526.1" font-size="12.8" fill="#111" text-anchor="end" stroke="#111" stroke-width="0.35">91</text>
<polyline points="763.00,520.18 775.36,497.16 787.73,498.64 800.09,526.80 812.45,494.40 824.82,508.17 837.18,513.26 849.55,521.96 861.91,496.39 874.27,523.66 886.64,508.06 899.00,507.56" fill="none" stroke="#1c4229" stroke-width="2.3" stroke-linejoin="round"/>
<path d="M763.00 516.88 L766.30 520.18 L763.00 523.48 L759.70 520.18 Z" fill="#c2183c"/>
<path d="M775.36 493.86 L778.66 497.16 L775.36 500.46 L772.06 497.16 Z" fill="#c2183c"/>
<path d="M787.73 495.34 L791.03 498.64 L787.73 501.94 L784.43 498.64 Z" fill="#c2183c"/>
<path d="M800.09 523.50 L803.39 526.80 L800.09 530.10 L796.79 526.80 Z" fill="#c2183c"/>
<path d="M812.45 491.10 L815.75 494.40 L812.45 497.70 L809.15 494.40 Z" fill="#c2183c"/>
<path d="M824.82 504.87 L828.12 508.17 L824.82 511.47 L821.52 508.17 Z" fill="#c2183c"/>
<path d="M837.18 509.96 L840.48 513.26 L837.18 516.56 L833.88 513.26 Z" fill="#c2183c"/>
<path d="M849.55 518.66 L852.85 521.96 L849.55 525.26 L846.25 521.96 Z" fill="#c2183c"/>
<path d="M861.91 493.09 L865.21 496.39 L861.91 499.69 L858.61 496.39 Z" fill="#c2183c"/>
<path d="M874.27 520.36 L877.57 523.66 L874.27 526.96 L870.97 523.66 Z" fill="#c2183c"/>
<path d="M886.64 504.76 L889.94 508.06 L886.64 511.36 L883.34 508.06 Z" fill="#c2183c"/>
<path d="M899.00 504.26 L902.30 507.56 L899.00 510.86 L895.70 507.56 Z" fill="#c2183c"/>
<rect x="911.50" y="509.29" width="8.8" height="10.89" fill="#a6a6a6" />
<rect x="923.93" y="497.16" width="8.8" height="12.12" fill="#2672b8" />
<rect x="936.35" y="498.64" width="8.8" height="10.65" fill="#2672b8" />
<rect x="948.78" y="509.29" width="8.8" height="17.51" fill="#a6a6a6" />
<rect x="961.21" y="494.40" width="8.8" height="14.89" fill="#2672b8" />
<rect x="973.64" y="508.09" width="8.8" height="1.20" fill="#2672b8" />
<rect x="986.06" y="509.29" width="8.8" height="3.97" fill="#a6a6a6" />
<rect x="998.49" y="509.29" width="8.8" height="12.67" fill="#a6a6a6" />
<rect x="1010.92" y="496.39" width="8.8" height="12.90" fill="#2672b8" />
<rect x="1023.35" y="509.29" width="8.8" height="14.37" fill="#a6a6a6" />
<rect x="1035.77" y="508.06" width="8.8" height="1.23" fill="#2672b8" />
<rect x="1048.20" y="507.56" width="8.8" height="1.72" fill="#2672b8" />
<rect x="1064.40" y="510.3" width="9" height="16" fill="#b31836" />
<rect x="1076.84" y="494.3" width="9" height="16" fill="#24418a" />
<rect x="1089.27" y="494.3" width="9" height="16" fill="#24418a" />
<rect x="1101.71" y="510.3" width="9" height="16" fill="#b31836" />
<rect x="1114.15" y="494.3" width="9" height="16" fill="#24418a" />
<rect x="1126.58" y="494.3" width="9" height="16" fill="#24418a" />
<rect x="1139.02" y="510.3" width="9" height="16" fill="#b31836" />
<rect x="1151.45" y="510.3" width="9" height="16" fill="#b31836" />
<rect x="1163.89" y="494.3" width="9" height="16" fill="#24418a" />
<rect x="1176.33" y="510.3" width="9" height="16" fill="#b31836" />
<rect x="1188.76" y="494.3" width="9" height="16" fill="#24418a" />
<rect x="1201.20" y="494.3" width="9" height="16" fill="#24418a" />
<text x="31.6" y="566.1999999999999" font-size="13.3" fill="#111" text-anchor="start" textLength="63" lengthAdjust="spacingAndGlyphs" stroke="#111" stroke-width="0.3">Шапокляк</text>
<text x="168.7" y="566.1999999999999" font-size="12.8" fill="#111" text-anchor="end" stroke="#111" stroke-width="0.35">513</text>
<text x="231.7" y="566.1999999999999" font-size="12.8" fill="#111" text-anchor="end" stroke="#111" stroke-width="0.35">683</text>
<text x="273.59999999999997" y="566.1999999999999" font-size="12.8" fill="#111" text-anchor="end" stroke="#111" stroke-width="0.35">-859</text>
<text x="329.0" y="566.1999999999999" font-size="12.8" fill="#111" text-anchor="end" stroke="#111" stroke-width="0.35">-793</text>
<text x="367.59999999999997" y="566.1999999999999" font-size="12.8" fill="#111" text-anchor="end" stroke="#111" stroke-width="0.35">712</text>
<text x="412.4" y="566.1999999999999" font-size="12.8" fill="#111" text-anchor="end" stroke="#111" stroke-width="0.35">953</text>
<text x="455.0" y="566.1999999999999" font-size="12.8" fill="#111" text-anchor="end" stroke="#111" stroke-width="0.35">968</text>
<text x="503.5" y="566.1999999999999" font-size="12.8" fill="#111" text-anchor="end" stroke="#111" stroke-width="0.35">785</text>
<text x="571.4000000000001" y="566.1999999999999" font-size="12.8" fill="#111" text-anchor="end" stroke="#111" stroke-width="0.35">171</text>
<text x="633.1" y="566.1999999999999" font-size="12.8" fill="#111" text-anchor="end" stroke="#111" stroke-width="0.35">-367</text>
<text x="688.5" y="566.1999999999999" font-size="12.8" fill="#111" text-anchor="end" stroke="#111" stroke-width="0.35">583</text>
<text x="751.5" y="566.1999999999999" font-size="12.8" fill="#111" text-anchor="end" stroke="#111" stroke-width="0.35">476</text>
<polyline points="763.00,542.57 775.36,539.55 787.73,566.90 800.09,565.73 812.45,539.04 824.82,534.77 837.18,534.50 849.55,537.75 861.91,548.63 874.27,558.17 886.64,541.33 899.00,543.23" fill="none" stroke="#1c4229" stroke-width="2.3" stroke-linejoin="round"/>
<path d="M763.00 539.27 L766.30 542.57 L763.00 545.87 L759.70 542.57 Z" fill="#c2183c"/>
<path d="M775.36 536.25 L778.66 539.55 L775.36 542.85 L772.06 539.55 Z" fill="#c2183c"/>
<path d="M787.73 563.60 L791.03 566.90 L787.73 570.20 L784.43 566.90 Z" fill="#c2183c"/>
<path d="M800.09 562.43 L803.39 565.73 L800.09 569.03 L796.79 565.73 Z" fill="#c2183c"/>
<path d="M812.45 535.74 L815.75 539.04 L812.45 542.34 L809.15 539.04 Z" fill="#c2183c"/>
<path d="M824.82 531.47 L828.12 534.77 L824.82 538.07 L821.52 534.77 Z" fill="#c2183c"/>
<path d="M837.18 531.20 L840.48 534.50 L837.18 537.80 L833.88 534.50 Z" fill="#c2183c"/>
<path d="M849.55 534.45 L852.85 537.75 L849.55 541.05 L846.25 537.75 Z" fill="#c2183c"/>
<path d="M861.91 545.33 L865.21 548.63 L861.91 551.93 L858.61 548.63 Z" fill="#c2183c"/>
<path d="M874.27 554.87 L877.57 558.17 L874.27 561.47 L870.97 558.17 Z" fill="#c2183c"/>
<path d="M886.64 538.03 L889.94 541.33 L886.64 544.63 L883.34 541.33 Z" fill="#c2183c"/>
<path d="M899.00 539.93 L902.30 543.23 L899.00 546.53 L895.70 543.23 Z" fill="#c2183c"/>
<rect x="911.50" y="542.57" width="8.8" height="9.10" fill="#2672b8" />
<rect x="923.93" y="539.55" width="8.8" height="12.11" fill="#2672b8" />
<rect x="936.35" y="551.67" width="8.8" height="15.23" fill="#a6a6a6" />
<rect x="948.78" y="551.67" width="8.8" height="14.06" fill="#a6a6a6" />
<rect x="961.21" y="539.04" width="8.8" height="12.63" fill="#2672b8" />
<rect x="973.64" y="534.77" width="8.8" height="16.90" fill="#2672b8" />
<rect x="986.06" y="534.50" width="8.8" height="17.17" fill="#2672b8" />
<rect x="998.49" y="537.75" width="8.8" height="13.92" fill="#2672b8" />
<rect x="1010.92" y="548.63" width="8.8" height="3.03" fill="#2672b8" />
<rect x="1023.35" y="551.67" width="8.8" height="6.51" fill="#a6a6a6" />
<rect x="1035.77" y="541.33" width="8.8" height="10.34" fill="#2672b8" />
<rect x="1048.20" y="543.23" width="8.8" height="8.44" fill="#2672b8" />
<rect x="1064.40" y="534.4" width="9" height="16" fill="#24418a" />
<rect x="1076.84" y="534.4" width="9" height="16" fill="#24418a" />
<rect x="1089.27" y="550.4" width="9" height="16" fill="#b31836" />
<rect x="1101.71" y="550.4" width="9" height="16" fill="#b31836" />
<rect x="1114.15" y="534.4" width="9" height="16" fill="#24418a" />
<rect x="1126.58" y="534.4" width="9" height="16" fill="#24418a" />
<rect x="1139.02" y="534.4" width="9" height="16" fill="#24418a" />
<rect x="1151.45" y="534.4" width="9" height="16" fill="#24418a" />
<rect x="1163.89" y="534.4" width="9" height="16" fill="#24418a" />
<rect x="1176.33" y="550.4" width="9" height="16" fill="#b31836" />
<rect x="1188.76" y="534.4" width="9" height="16" fill="#24418a" />
<rect x="1201.20" y="534.4" width="9" height="16" fill="#24418a" />
<path d="M386 600.5 H390.5 V604 H394 V608.5 H390.5 V612 H386 V608.5 H382.5 V604 H386 Z" fill="#fff" stroke="#111" stroke-width="1.6" stroke-linejoin="round"/>
<rect x="1288" y="191" width="21" height="457" fill="#e2e2e2" />
<rect x="1289" y="210" width="1.5" height="438" fill="#e8e8e8" />
<line x1="1288" y1="210" x2="1288" y2="648" stroke="#bdbdbd" stroke-width="1.2" />
<rect x="1290" y="208" width="16" height="425" fill="#d6d6d6" />
<rect x="1291.2" y="193.7" width="14.7" height="14.1" fill="#ffffff" stroke="#cfcfcf" stroke-width="0.8"/>
<path d="M1295 203.5 L1299.3 199 L1303.6 203.5 Z" fill="#333"/>
<rect x="1290.8" y="208.6" width="15.4" height="337.8" fill="#ffffff" stroke="#b8b8b8" stroke-width="1"/>
<rect x="1291.2" y="633.2" width="14.7" height="14.2" fill="#ffffff" stroke="#cfcfcf" stroke-width="0.8"/>
<path d="M1295 638.3 L1299.3 642.8 L1303.6 638.3 Z" fill="#333"/>
<rect x="0" y="648" width="1309" height="23" fill="#e6e6e6" />
<line x1="0" y1="648.4" x2="1309" y2="648.4" stroke="#b5b5b5" stroke-width="1.3" />
<line x1="0" y1="670.6" x2="1309" y2="670.6" stroke="#d0d0d0" stroke-width="1" />
<path d="M27 656.5 L22.5 659 L27 661.5 Z" fill="#b8b8b8"/>
<path d="M46 655.7 L51.2 659 L46 662.2 Z" fill="#0e4a2a"/>
<rect x="84" y="647.2" width="155" height="21" fill="#ffffff" />
<line x1="84.3" y1="648" x2="84.3" y2="668" stroke="#a8a8a8" stroke-width="0.8" />
<line x1="239" y1="648" x2="239" y2="668" stroke="#a8a8a8" stroke-width="0.8" />
<rect x="84" y="666.8" width="155" height="2" fill="#0f6b3a" />
<text x="94.4" y="663" font-size="13.7" font-weight="700" fill="#126b3c" text-anchor="start" textLength="134.2" lengthAdjust="spacingAndGlyphs"  stroke="#126b3c" stroke-width="0.22">Спарклайны (типы)</text>
<text x="257.5" y="662.5" font-size="13.6" fill="#333" text-anchor="start" textLength="209.7" lengthAdjust="spacingAndGlyphs"  stroke="#333" stroke-width="0.22">Макс, Мин, Первая, Последняя...</text>
<line x1="485.5" y1="651" x2="485.5" y2="667" stroke="#a0a0a0" stroke-width="1" />
<text x="502.7" y="662.5" font-size="13.6" fill="#333" text-anchor="start" textLength="208.3" lengthAdjust="spacingAndGlyphs"  stroke="#333" stroke-width="0.22">Зависимость от размера ячейки</text>
<rect x="731.5" y="660.2" width="2" height="2" fill="#333" />
<rect x="735.8" y="660.2" width="2" height="2" fill="#333" />
<rect x="740.1" y="660.2" width="2" height="2" fill="#333" />
<circle cx="759.6" cy="659.5" r="7.3" stroke="#444" stroke-width="1.3" fill="none"/><path d="M755.3 659.5 H763.9 M759.6 655.2 V663.8" stroke="#444" stroke-width="1.5"/>
<rect x="783" y="654.6" width="1.6" height="1.6" fill="#999" />
<rect x="783" y="658.8" width="1.6" height="1.6" fill="#999" />
<rect x="783" y="663" width="1.6" height="1.6" fill="#999" />
<rect x="798" y="652" width="490" height="14.4" fill="#d6d6d6" />
<rect x="798.3" y="652.5" width="14" height="13.8" fill="#ffffff" stroke="#cfcfcf" stroke-width="0.8"/>
<path d="M807.2 655.5 L802.8 659.4 L807.2 663.3 Z" fill="#333"/>
<rect x="813.5" y="652.3" width="255" height="14" fill="#ffffff" stroke="#b8b8b8" stroke-width="1"/>
<rect x="1273.8" y="652.3" width="13.7" height="13.9" fill="#ffffff" stroke="#cfcfcf" stroke-width="0.8"/>
<path d="M1278.5 655.5 L1282.8 659.3 L1278.5 663.1 Z" fill="#333"/>
<rect x="0" y="671" width="1309" height="20" fill="#ebebeb" />
<text x="7" y="685.5" font-size="10.8" fill="#4a4a4a" text-anchor="start" textLength="33.2" lengthAdjust="spacingAndGlyphs"  stroke="#4a4a4a" stroke-width="0.22">Готово</text>
<g stroke="#666" stroke-width="1.2" fill="none"><rect x="63" y="680" width="11" height="7"/><path d="M63 683.5 H74 M66.7 680 V687 M70.3 680 V687"/></g>
<circle cx="65" cy="677.5" r="1.8" fill="#555"/><rect x="68" y="676" width="6" height="3" fill="#666"/>
<rect x="1033" y="671.4" width="32.6" height="18.5" fill="#cfcfcf" />
<g stroke="#666" stroke-width="1" fill="none"><rect x="1042.5" y="675.7" width="11.8" height="10.6"/><path d="M1042.5 679.2 H1054.3 M1042.5 682.7 H1054.3 M1046.4 675.7 V686.3 M1050.3 675.7 V686.3"/></g>
<g stroke="#777" stroke-width="1" fill="none"><rect x="1076.5" y="676" width="11.5" height="10.5"/><rect x="1079.5" y="678" width="5.5" height="6.5"/></g>
<g stroke="#777" stroke-width="1.1" fill="none"><path d="M1110.3 676 V686.5 H1122 V676 M1114 676 V681 H1118.5 V676"/></g>
<path d="M1137 681.6 H1144.5" stroke="#444" stroke-width="1.6"/><path d="M1147.5 681.6 H1250" stroke="#999" stroke-width="1"/>
<rect x="1197" y="675.7" width="4.8" height="11.8" fill="#444" />
<path d="M1253.8 681.6 H1262.5 M1258.15 677.2 V686" stroke="#333" stroke-width="1.7"/>
<text x="1276" y="686" font-size="11" fill="#666" text-anchor="start" textLength="26" lengthAdjust="spacingAndGlyphs"  stroke="#666" stroke-width="0.22">100%</text>
</svg>
</body></html>
